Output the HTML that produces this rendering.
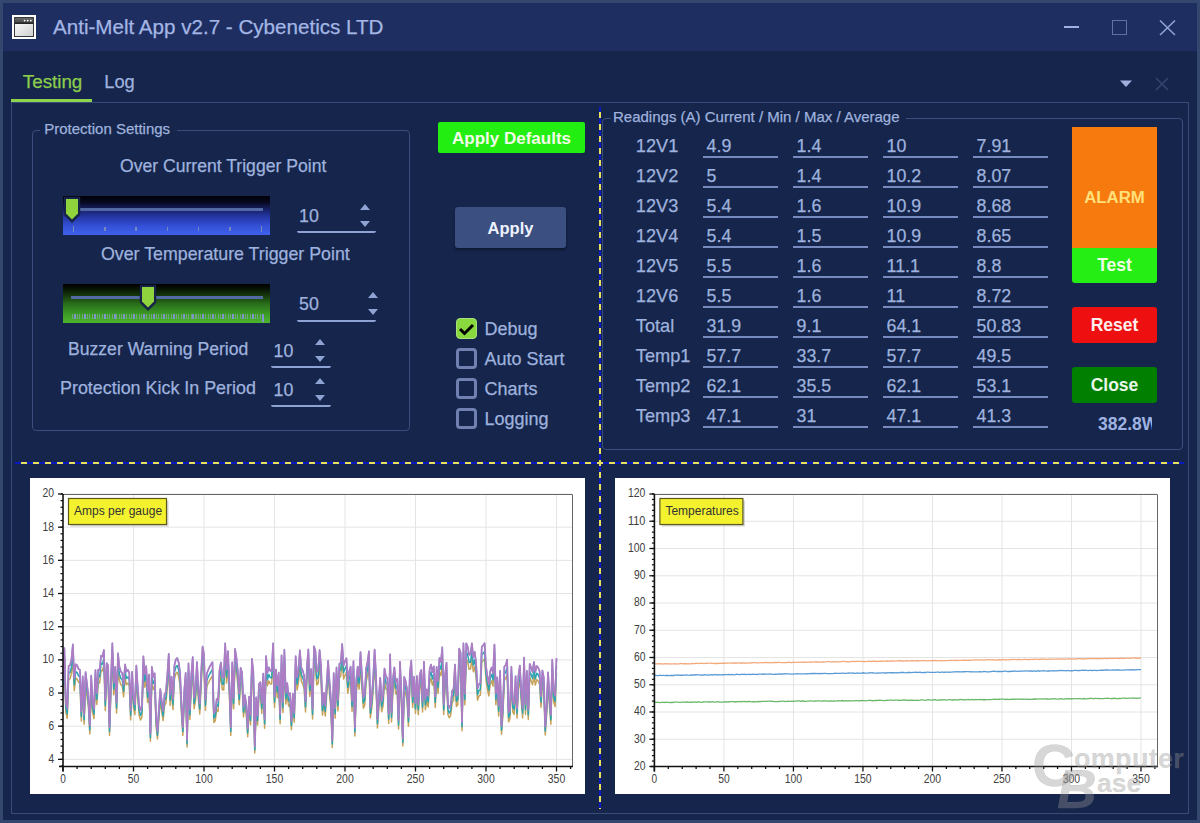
<!DOCTYPE html>
<html><head><meta charset="utf-8"><style>
html,body{margin:0;padding:0;}
body{width:1200px;height:823px;position:relative;overflow:hidden;background:#34476f;font-family:"Liberation Sans", sans-serif;}
.t{position:absolute;line-height:1;white-space:nowrap;font-family:"Liberation Sans", sans-serif;-webkit-text-stroke:0.25px currentColor;}
</style></head><body>
<div style="position:absolute;left:3px;top:3px;width:1194px;height:48px;background:#1e2e61"></div><div style="position:absolute;left:3px;top:51px;width:1194px;height:769px;background:#15254b"></div><svg style="position:absolute;left:12px;top:15px" width="24" height="24" viewBox="0 0 24 24">
<defs><linearGradient id="ib" x1="0" y1="0" x2="1" y2="1"><stop offset="0" stop-color="#fafafa"/><stop offset="1" stop-color="#cfcfcf"/></linearGradient>
<linearGradient id="it" x1="0" y1="0" x2="0" y2="1"><stop offset="0" stop-color="#6a6a6a"/><stop offset="1" stop-color="#4a4a4a"/></linearGradient></defs>
<rect x="0" y="0" width="24" height="24" fill="#ffffff"/>
<rect x="2" y="2" width="20" height="20" fill="#3a3a3a"/>
<rect x="3" y="3" width="18" height="4.5" fill="url(#it)"/>
<rect x="3" y="7.5" width="18" height="1.5" fill="#262626"/>
<rect x="3" y="9" width="18" height="12" fill="url(#ib)"/>
<circle cx="12.6" cy="5.6" r="0.9" fill="#fff"/><circle cx="15.7" cy="5.6" r="0.9" fill="#fff"/><circle cx="18.8" cy="5.6" r="0.9" fill="#fff"/>
</svg><div class="t" style="left:53.00px;top:17.00px;font-size:20.6px;color:#a3b6e4;font-weight:400;">Anti-Melt App v2.7 - Cybenetics LTD</div><div style="position:absolute;left:1064px;top:26px;width:15px;height:2px;background:#9fb1e0"></div><div style="position:absolute;left:1112px;top:20px;width:15px;height:15px;border:1.5px solid #5f72a8;box-sizing:border-box"></div><svg style="position:absolute;left:1158px;top:18px" width="19" height="19" viewBox="0 0 19 19"><path d="M2 2.5 L17 17 M17 2.5 L2 17" stroke="#93a6d8" stroke-width="1.5"/></svg><div class="t" style="left:22.80px;top:73.00px;font-size:18.8px;color:#8dce4c;font-weight:400;">Testing</div><div class="t" style="left:104.30px;top:73.00px;font-size:18.2px;color:#9fb2de;font-weight:400;">Log</div><div style="position:absolute;left:11px;top:102px;width:1178px;height:712px;border:1px solid #394b78;box-sizing:border-box"></div><div style="position:absolute;left:11px;top:99px;width:81px;height:3px;background:#8ed34c"></div><svg style="position:absolute;left:1118px;top:79px" width="16" height="10" viewBox="0 0 16 10"><path d="M2 1.5 L14 1.5 L8 8 Z" fill="#9fb0df"/></svg><svg style="position:absolute;left:1154px;top:76px" width="16" height="16" viewBox="0 0 16 16"><path d="M2 2 L14 14 M14 2 L2 14" stroke="#34466f" stroke-width="1.6"/></svg><div style="position:absolute;left:32px;top:130px;width:378px;height:301px;border:1px solid #3a4c7c;border-radius:4px;box-sizing:border-box"></div><div style="position:absolute;left:40px;top:129px;width:137px;height:3px;background:#15254b"></div><div class="t" style="left:44.20px;top:121.00px;font-size:15px;color:#9fb2de;font-weight:400;">Protection Settings</div><div class="t" style="left:120.00px;top:158.00px;font-size:17.6px;color:#9fb2de;font-weight:400;">Over Current Trigger Point</div><div class="t" style="left:101.00px;top:246.00px;font-size:17.8px;color:#9fb2de;font-weight:400;">Over Temperature Trigger Point</div><div style="position:absolute;left:63px;top:196px;width:207px;height:39px;background:linear-gradient(to bottom,#000006 0px,#06081c 6px,#141c58 12px,#2434a0 20px,#3450d6 30px,#3f62ee 39px)"></div><div style="position:absolute;left:79px;top:208px;width:184px;height:3px;background:#5369a4"></div><div style="position:absolute;left:72.5px;top:226px;width:1.6px;height:6px;background:#7389c0"></div><div style="position:absolute;left:104.0px;top:227px;width:1.6px;height:4px;background:#7389c0"></div><div style="position:absolute;left:135.0px;top:227px;width:1.6px;height:4px;background:#7389c0"></div><div style="position:absolute;left:166.5px;top:227px;width:1.6px;height:4px;background:#7389c0"></div><div style="position:absolute;left:197.5px;top:227px;width:1.6px;height:4px;background:#7389c0"></div><div style="position:absolute;left:229.0px;top:227px;width:1.6px;height:4px;background:#7389c0"></div><div style="position:absolute;left:260.5px;top:226px;width:1.6px;height:6px;background:#7389c0"></div><svg style="position:absolute;left:63px;top:196px" width="20" height="28" viewBox="0 0 20 28"><path d="M1.5 1.5 H16.5 V18.5 L9 26 L1.5 18.5 Z" fill="#172349" stroke="#172349" stroke-width="1.5" stroke-linejoin="round"/><path d="M3 3 H15 V17.5 L9 23.5 L3 17.5 Z" fill="#8fd43c"/></svg><div style="position:absolute;left:63px;top:284px;width:207px;height:39px;background:linear-gradient(to bottom,#000000 0px,#081404 5px,#153a0c 12px,#2a6e1a 20px,#3b9a24 30px,#4db52e 39px)"></div><div style="position:absolute;left:71px;top:296px;width:192px;height:3px;background:#5369a4"></div><div style="position:absolute;left:72px;top:314px;width:190px;height:5px;background:repeating-linear-gradient(to right,rgba(150,170,200,0.55) 0px,rgba(150,170,200,0.55) 1px,transparent 1px,transparent 2.47px)"></div><div style="position:absolute;left:74.0px;top:314px;width:2px;height:5px;background:#7f95cf"></div><div style="position:absolute;left:83.5px;top:314px;width:2px;height:5px;background:#7f95cf"></div><div style="position:absolute;left:93.5px;top:314px;width:2px;height:5px;background:#7f95cf"></div><div style="position:absolute;left:103.5px;top:314px;width:2px;height:5px;background:#7f95cf"></div><div style="position:absolute;left:113.5px;top:314px;width:2px;height:5px;background:#7f95cf"></div><div style="position:absolute;left:123.0px;top:314px;width:2px;height:5px;background:#7f95cf"></div><div style="position:absolute;left:133.0px;top:314px;width:2px;height:5px;background:#7f95cf"></div><div style="position:absolute;left:143.0px;top:314px;width:2px;height:5px;background:#7f95cf"></div><div style="position:absolute;left:153.0px;top:314px;width:2px;height:5px;background:#7f95cf"></div><div style="position:absolute;left:162.5px;top:314px;width:2px;height:5px;background:#7f95cf"></div><div style="position:absolute;left:172.5px;top:314px;width:2px;height:5px;background:#7f95cf"></div><div style="position:absolute;left:182.5px;top:314px;width:2px;height:5px;background:#7f95cf"></div><div style="position:absolute;left:192.0px;top:314px;width:2px;height:5px;background:#7f95cf"></div><div style="position:absolute;left:202.0px;top:314px;width:2px;height:5px;background:#7f95cf"></div><div style="position:absolute;left:212.0px;top:314px;width:2px;height:5px;background:#7f95cf"></div><div style="position:absolute;left:222.0px;top:314px;width:2px;height:5px;background:#7f95cf"></div><div style="position:absolute;left:231.5px;top:314px;width:2px;height:5px;background:#7f95cf"></div><div style="position:absolute;left:241.5px;top:314px;width:2px;height:5px;background:#7f95cf"></div><div style="position:absolute;left:251.5px;top:314px;width:2px;height:5px;background:#7f95cf"></div><div style="position:absolute;left:261.5px;top:314px;width:2px;height:8px;background:#7f95cf"></div><svg style="position:absolute;left:139px;top:284px" width="20" height="28" viewBox="0 0 20 28"><path d="M1.5 1.5 H16.5 V18.5 L9 26 L1.5 18.5 Z" fill="#172349" stroke="#172349" stroke-width="1.5" stroke-linejoin="round"/><path d="M3 3 H15 V17.5 L9 23.5 L3 17.5 Z" fill="#8fd43c"/></svg><div class="t" style="left:299.00px;top:208.00px;font-size:17.8px;color:#9fb2de;font-weight:400;">10</div><div style="position:absolute;left:297px;top:228px;width:79px;height:5px;border-bottom:2px solid #8ea2d4;border-radius:0 0 2px 2px;box-sizing:border-box"></div><svg style="position:absolute;left:360px;top:204.3px" width="10" height="24" viewBox="0 0 10 24"><path d="M0 6 L5 0 L10 6 Z M0 17 L10 17 L5 23 Z" fill="#8ea2d4"/></svg><div class="t" style="left:299.00px;top:296.00px;font-size:17.8px;color:#9fb2de;font-weight:400;">50</div><div style="position:absolute;left:297px;top:317px;width:79px;height:5px;border-bottom:2px solid #8ea2d4;border-radius:0 0 2px 2px;box-sizing:border-box"></div><svg style="position:absolute;left:368px;top:292.3px" width="10" height="24" viewBox="0 0 10 24"><path d="M0 6 L5 0 L10 6 Z M0 17 L10 17 L5 23 Z" fill="#8ea2d4"/></svg><div class="t" style="left:68.00px;top:341.00px;font-size:17.6px;color:#9fb2de;font-weight:400;">Buzzer Warning Period</div><div class="t" style="left:273.50px;top:343.00px;font-size:17.8px;color:#9fb2de;font-weight:400;">10</div><div style="position:absolute;left:271px;top:363px;width:60px;height:5px;border-bottom:2px solid #8ea2d4;border-radius:0 0 2px 2px;box-sizing:border-box"></div><svg style="position:absolute;left:315px;top:339px" width="10" height="24" viewBox="0 0 10 24"><path d="M0 6 L5 0 L10 6 Z M0 17 L10 17 L5 23 Z" fill="#8ea2d4"/></svg><div class="t" style="left:60.00px;top:380.00px;font-size:17.9px;color:#9fb2de;font-weight:400;">Protection Kick In Period</div><div class="t" style="left:273.50px;top:382.00px;font-size:17.8px;color:#9fb2de;font-weight:400;">10</div><div style="position:absolute;left:271px;top:402px;width:60px;height:5px;border-bottom:2px solid #8ea2d4;border-radius:0 0 2px 2px;box-sizing:border-box"></div><svg style="position:absolute;left:315px;top:378.3px" width="10" height="24" viewBox="0 0 10 24"><path d="M0 6 L5 0 L10 6 Z M0 17 L10 17 L5 23 Z" fill="#8ea2d4"/></svg><div style="position:absolute;left:438px;top:122px;width:147px;height:31px;background:#22ee11;border-radius:2px"></div><div class="t" style="left:438px;top:123px;width:147px;height:31px;line-height:31px;text-align:center;font-size:17px;font-weight:700;color:#f2fbe8;-webkit-text-stroke:0">Apply Defaults</div><div style="position:absolute;left:455px;top:207px;width:111px;height:41px;background:#3b4f80;border-radius:3px;box-shadow:0 2px 3px rgba(0,0,0,0.35)"></div><div class="t" style="left:455px;top:208px;width:111px;height:41px;line-height:41px;text-align:center;font-size:16.5px;font-weight:700;color:#eef2fb;-webkit-text-stroke:0">Apply</div><div style="position:absolute;left:456px;top:318px;width:21px;height:21px;background:#88d83e;border-radius:4px;border:1.2px solid #a6e27c;box-sizing:border-box"></div><svg style="position:absolute;left:456px;top:318px" width="21" height="21" viewBox="0 0 21 21"><path d="M4 11 L8.5 15.5 L17 7" fill="none" stroke="#000" stroke-width="3"/></svg><div class="t" style="left:484.50px;top:320.00px;font-size:18px;color:#9fb2de;font-weight:400;">Debug</div><div style="position:absolute;left:456px;top:348px;width:21px;height:21px;border:3px solid #6f80b1;border-radius:4px;box-sizing:border-box"></div><div class="t" style="left:484.50px;top:350.00px;font-size:18px;color:#9fb2de;font-weight:400;">Auto Start</div><div style="position:absolute;left:456px;top:378px;width:21px;height:21px;border:3px solid #6f80b1;border-radius:4px;box-sizing:border-box"></div><div class="t" style="left:484.50px;top:380.00px;font-size:18px;color:#9fb2de;font-weight:400;">Charts</div><div style="position:absolute;left:456px;top:408px;width:21px;height:21px;border:3px solid #6f80b1;border-radius:4px;box-sizing:border-box"></div><div class="t" style="left:484.50px;top:410.00px;font-size:18px;color:#9fb2de;font-weight:400;">Logging</div><div style="position:absolute;left:599px;top:107px;width:2px;height:702px;background:repeating-linear-gradient(to bottom,#0b1bc4 0px,#0b1bc4 5px,#e8e060 5px,#e8e060 11px,#0b1bc4 11px,#0b1bc4 12px)"></div><div style="position:absolute;left:15px;top:462px;width:1169px;height:2px;background:repeating-linear-gradient(to right,#0b1bc4 0px,#0b1bc4 6px,#e8e060 6px,#e8e060 12px)"></div><div style="position:absolute;left:602px;top:118px;width:581px;height:332px;border:1px solid #3a4c7c;border-radius:4px;box-sizing:border-box"></div><div style="position:absolute;left:611px;top:117px;width:295px;height:3px;background:#15254b"></div><div class="t" style="left:613.00px;top:109.00px;font-size:15px;color:#9fb2de;font-weight:400;">Readings (A) Current / Min / Max / Average</div><div class="t" style="left:635.80px;top:137.00px;font-size:18.2px;color:#9fb2de;font-weight:400;">12V1</div><div class="t" style="left:706.60px;top:138.00px;font-size:17.8px;color:#9fb2de;font-weight:400;">4.9</div><div style="position:absolute;left:703px;top:156px;width:75px;height:2px;background:#788bc0"></div><div class="t" style="left:796.60px;top:138.00px;font-size:17.8px;color:#9fb2de;font-weight:400;">1.4</div><div style="position:absolute;left:793px;top:156px;width:75px;height:2px;background:#788bc0"></div><div class="t" style="left:886.60px;top:138.00px;font-size:17.8px;color:#9fb2de;font-weight:400;">10</div><div style="position:absolute;left:883px;top:156px;width:75px;height:2px;background:#788bc0"></div><div class="t" style="left:976.60px;top:138.00px;font-size:17.8px;color:#9fb2de;font-weight:400;">7.91</div><div style="position:absolute;left:973px;top:156px;width:75px;height:2px;background:#788bc0"></div><div class="t" style="left:635.80px;top:167.00px;font-size:18.2px;color:#9fb2de;font-weight:400;">12V2</div><div class="t" style="left:706.60px;top:168.00px;font-size:17.8px;color:#9fb2de;font-weight:400;">5</div><div style="position:absolute;left:703px;top:186px;width:75px;height:2px;background:#788bc0"></div><div class="t" style="left:796.60px;top:168.00px;font-size:17.8px;color:#9fb2de;font-weight:400;">1.4</div><div style="position:absolute;left:793px;top:186px;width:75px;height:2px;background:#788bc0"></div><div class="t" style="left:886.60px;top:168.00px;font-size:17.8px;color:#9fb2de;font-weight:400;">10.2</div><div style="position:absolute;left:883px;top:186px;width:75px;height:2px;background:#788bc0"></div><div class="t" style="left:976.60px;top:168.00px;font-size:17.8px;color:#9fb2de;font-weight:400;">8.07</div><div style="position:absolute;left:973px;top:186px;width:75px;height:2px;background:#788bc0"></div><div class="t" style="left:635.80px;top:197.00px;font-size:18.2px;color:#9fb2de;font-weight:400;">12V3</div><div class="t" style="left:706.60px;top:198.00px;font-size:17.8px;color:#9fb2de;font-weight:400;">5.4</div><div style="position:absolute;left:703px;top:216px;width:75px;height:2px;background:#788bc0"></div><div class="t" style="left:796.60px;top:198.00px;font-size:17.8px;color:#9fb2de;font-weight:400;">1.6</div><div style="position:absolute;left:793px;top:216px;width:75px;height:2px;background:#788bc0"></div><div class="t" style="left:886.60px;top:198.00px;font-size:17.8px;color:#9fb2de;font-weight:400;">10.9</div><div style="position:absolute;left:883px;top:216px;width:75px;height:2px;background:#788bc0"></div><div class="t" style="left:976.60px;top:198.00px;font-size:17.8px;color:#9fb2de;font-weight:400;">8.68</div><div style="position:absolute;left:973px;top:216px;width:75px;height:2px;background:#788bc0"></div><div class="t" style="left:635.80px;top:227.00px;font-size:18.2px;color:#9fb2de;font-weight:400;">12V4</div><div class="t" style="left:706.60px;top:228.00px;font-size:17.8px;color:#9fb2de;font-weight:400;">5.4</div><div style="position:absolute;left:703px;top:246px;width:75px;height:2px;background:#788bc0"></div><div class="t" style="left:796.60px;top:228.00px;font-size:17.8px;color:#9fb2de;font-weight:400;">1.5</div><div style="position:absolute;left:793px;top:246px;width:75px;height:2px;background:#788bc0"></div><div class="t" style="left:886.60px;top:228.00px;font-size:17.8px;color:#9fb2de;font-weight:400;">10.9</div><div style="position:absolute;left:883px;top:246px;width:75px;height:2px;background:#788bc0"></div><div class="t" style="left:976.60px;top:228.00px;font-size:17.8px;color:#9fb2de;font-weight:400;">8.65</div><div style="position:absolute;left:973px;top:246px;width:75px;height:2px;background:#788bc0"></div><div class="t" style="left:635.80px;top:257.00px;font-size:18.2px;color:#9fb2de;font-weight:400;">12V5</div><div class="t" style="left:706.60px;top:258.00px;font-size:17.8px;color:#9fb2de;font-weight:400;">5.5</div><div style="position:absolute;left:703px;top:276px;width:75px;height:2px;background:#788bc0"></div><div class="t" style="left:796.60px;top:258.00px;font-size:17.8px;color:#9fb2de;font-weight:400;">1.6</div><div style="position:absolute;left:793px;top:276px;width:75px;height:2px;background:#788bc0"></div><div class="t" style="left:886.60px;top:258.00px;font-size:17.8px;color:#9fb2de;font-weight:400;">11.1</div><div style="position:absolute;left:883px;top:276px;width:75px;height:2px;background:#788bc0"></div><div class="t" style="left:976.60px;top:258.00px;font-size:17.8px;color:#9fb2de;font-weight:400;">8.8</div><div style="position:absolute;left:973px;top:276px;width:75px;height:2px;background:#788bc0"></div><div class="t" style="left:635.80px;top:287.00px;font-size:18.2px;color:#9fb2de;font-weight:400;">12V6</div><div class="t" style="left:706.60px;top:288.00px;font-size:17.8px;color:#9fb2de;font-weight:400;">5.5</div><div style="position:absolute;left:703px;top:306px;width:75px;height:2px;background:#788bc0"></div><div class="t" style="left:796.60px;top:288.00px;font-size:17.8px;color:#9fb2de;font-weight:400;">1.6</div><div style="position:absolute;left:793px;top:306px;width:75px;height:2px;background:#788bc0"></div><div class="t" style="left:886.60px;top:288.00px;font-size:17.8px;color:#9fb2de;font-weight:400;">11</div><div style="position:absolute;left:883px;top:306px;width:75px;height:2px;background:#788bc0"></div><div class="t" style="left:976.60px;top:288.00px;font-size:17.8px;color:#9fb2de;font-weight:400;">8.72</div><div style="position:absolute;left:973px;top:306px;width:75px;height:2px;background:#788bc0"></div><div class="t" style="left:635.80px;top:317.00px;font-size:18.2px;color:#9fb2de;font-weight:400;">Total</div><div class="t" style="left:706.60px;top:318.00px;font-size:17.8px;color:#9fb2de;font-weight:400;">31.9</div><div style="position:absolute;left:703px;top:336px;width:75px;height:2px;background:#788bc0"></div><div class="t" style="left:796.60px;top:318.00px;font-size:17.8px;color:#9fb2de;font-weight:400;">9.1</div><div style="position:absolute;left:793px;top:336px;width:75px;height:2px;background:#788bc0"></div><div class="t" style="left:886.60px;top:318.00px;font-size:17.8px;color:#9fb2de;font-weight:400;">64.1</div><div style="position:absolute;left:883px;top:336px;width:75px;height:2px;background:#788bc0"></div><div class="t" style="left:976.60px;top:318.00px;font-size:17.8px;color:#9fb2de;font-weight:400;">50.83</div><div style="position:absolute;left:973px;top:336px;width:75px;height:2px;background:#788bc0"></div><div class="t" style="left:635.80px;top:347.00px;font-size:18.2px;color:#9fb2de;font-weight:400;">Temp1</div><div class="t" style="left:706.60px;top:348.00px;font-size:17.8px;color:#9fb2de;font-weight:400;">57.7</div><div style="position:absolute;left:703px;top:366px;width:75px;height:2px;background:#788bc0"></div><div class="t" style="left:796.60px;top:348.00px;font-size:17.8px;color:#9fb2de;font-weight:400;">33.7</div><div style="position:absolute;left:793px;top:366px;width:75px;height:2px;background:#788bc0"></div><div class="t" style="left:886.60px;top:348.00px;font-size:17.8px;color:#9fb2de;font-weight:400;">57.7</div><div style="position:absolute;left:883px;top:366px;width:75px;height:2px;background:#788bc0"></div><div class="t" style="left:976.60px;top:348.00px;font-size:17.8px;color:#9fb2de;font-weight:400;">49.5</div><div style="position:absolute;left:973px;top:366px;width:75px;height:2px;background:#788bc0"></div><div class="t" style="left:635.80px;top:377.00px;font-size:18.2px;color:#9fb2de;font-weight:400;">Temp2</div><div class="t" style="left:706.60px;top:378.00px;font-size:17.8px;color:#9fb2de;font-weight:400;">62.1</div><div style="position:absolute;left:703px;top:396px;width:75px;height:2px;background:#788bc0"></div><div class="t" style="left:796.60px;top:378.00px;font-size:17.8px;color:#9fb2de;font-weight:400;">35.5</div><div style="position:absolute;left:793px;top:396px;width:75px;height:2px;background:#788bc0"></div><div class="t" style="left:886.60px;top:378.00px;font-size:17.8px;color:#9fb2de;font-weight:400;">62.1</div><div style="position:absolute;left:883px;top:396px;width:75px;height:2px;background:#788bc0"></div><div class="t" style="left:976.60px;top:378.00px;font-size:17.8px;color:#9fb2de;font-weight:400;">53.1</div><div style="position:absolute;left:973px;top:396px;width:75px;height:2px;background:#788bc0"></div><div class="t" style="left:635.80px;top:407.00px;font-size:18.2px;color:#9fb2de;font-weight:400;">Temp3</div><div class="t" style="left:706.60px;top:408.00px;font-size:17.8px;color:#9fb2de;font-weight:400;">47.1</div><div style="position:absolute;left:703px;top:426px;width:75px;height:2px;background:#788bc0"></div><div class="t" style="left:796.60px;top:408.00px;font-size:17.8px;color:#9fb2de;font-weight:400;">31</div><div style="position:absolute;left:793px;top:426px;width:75px;height:2px;background:#788bc0"></div><div class="t" style="left:886.60px;top:408.00px;font-size:17.8px;color:#9fb2de;font-weight:400;">47.1</div><div style="position:absolute;left:883px;top:426px;width:75px;height:2px;background:#788bc0"></div><div class="t" style="left:976.60px;top:408.00px;font-size:17.8px;color:#9fb2de;font-weight:400;">41.3</div><div style="position:absolute;left:973px;top:426px;width:75px;height:2px;background:#788bc0"></div><div style="position:absolute;left:1072px;top:127px;width:85px;height:121px;background:#f67a0d"></div><div class="t" style="left:1072px;top:189.5px;width:85px;text-align:center;font-size:16.8px;font-weight:700;color:#ffe07a;-webkit-text-stroke:0">ALARM</div><div style="position:absolute;left:1072px;top:248px;width:85px;height:35px;background:#25ee14;border-radius:0 0 3px 3px"></div><div class="t" style="left:1072px;top:248px;width:85px;height:35px;line-height:35px;text-align:center;font-size:17.5px;font-weight:700;color:#f0fbe6;-webkit-text-stroke:0">Test</div><div style="position:absolute;left:1072px;top:307px;width:85px;height:36px;background:#ee1010;border-radius:3px"></div><div class="t" style="left:1072px;top:307px;width:85px;height:36px;line-height:36px;text-align:center;font-size:17.5px;font-weight:700;color:#fdeeee;-webkit-text-stroke:0">Reset</div><div style="position:absolute;left:1072px;top:367px;width:85px;height:36px;background:#017f01;border-radius:3px"></div><div class="t" style="left:1072px;top:367px;width:85px;height:36px;line-height:36px;text-align:center;font-size:17.5px;font-weight:700;color:#eaf6ea;-webkit-text-stroke:0">Close</div><div style="position:absolute;left:1090px;top:410px;width:62px;height:26px;overflow:hidden"><div class="t" style="left:8px;top:6.3px;font-size:17.5px;font-weight:700;color:#9fb3e2;-webkit-text-stroke:0">382.8W</div></div><svg style="position:absolute;left:30px;top:478px" width="555" height="316" viewBox="0 0 555 316"><rect width="555" height="316" fill="#fff"/><line x1="33" y1="16.00" x2="542" y2="16.00" stroke="#e4e4e4" stroke-width="1"/><line x1="33" y1="49.17" x2="542" y2="49.17" stroke="#e4e4e4" stroke-width="1"/><line x1="33" y1="82.34" x2="542" y2="82.34" stroke="#e4e4e4" stroke-width="1"/><line x1="33" y1="115.51" x2="542" y2="115.51" stroke="#e4e4e4" stroke-width="1"/><line x1="33" y1="148.68" x2="542" y2="148.68" stroke="#e4e4e4" stroke-width="1"/><line x1="33" y1="181.86" x2="542" y2="181.86" stroke="#e4e4e4" stroke-width="1"/><line x1="33" y1="215.03" x2="542" y2="215.03" stroke="#e4e4e4" stroke-width="1"/><line x1="33" y1="248.20" x2="542" y2="248.20" stroke="#e4e4e4" stroke-width="1"/><line x1="33" y1="281.37" x2="542" y2="281.37" stroke="#e4e4e4" stroke-width="1"/><line x1="103.50" y1="16" x2="103.50" y2="288.5" stroke="#e4e4e4" stroke-width="1"/><line x1="174.00" y1="16" x2="174.00" y2="288.5" stroke="#e4e4e4" stroke-width="1"/><line x1="244.50" y1="16" x2="244.50" y2="288.5" stroke="#e4e4e4" stroke-width="1"/><line x1="315.00" y1="16" x2="315.00" y2="288.5" stroke="#e4e4e4" stroke-width="1"/><line x1="385.50" y1="16" x2="385.50" y2="288.5" stroke="#e4e4e4" stroke-width="1"/><line x1="456.00" y1="16" x2="456.00" y2="288.5" stroke="#e4e4e4" stroke-width="1"/><line x1="526.50" y1="16" x2="526.50" y2="288.5" stroke="#e4e4e4" stroke-width="1"/><polyline points="33.00,214.27 34.41,185.09 35.82,234.37 37.23,240.35 38.64,201.56 40.05,200.90 41.46,195.54 42.87,181.80 44.28,212.68 45.69,200.07 47.10,200.80 48.51,204.27 49.92,205.07 51.33,243.07 52.74,210.94 54.15,246.13 55.56,207.16 56.97,217.79 58.38,229.02 59.79,256.00 61.20,210.38 62.61,233.85 64.02,240.58 65.43,205.27 66.84,226.45 68.25,204.84 69.66,205.05 71.07,192.14 72.48,192.90 73.89,186.98 75.30,232.60 76.71,199.02 78.12,201.09 79.53,257.35 80.94,213.41 82.35,180.78 83.76,216.85 85.17,202.27 86.58,234.95 87.99,190.00 89.40,202.32 90.81,206.63 92.22,207.94 93.63,218.78 95.04,200.17 96.45,206.74 97.86,205.17 99.27,207.67 100.68,241.92 102.09,206.95 103.50,229.92 104.91,236.71 106.32,201.17 107.73,220.57 109.14,237.25 110.55,241.96 111.96,238.82 113.37,192.69 114.78,209.23 116.19,201.77 117.60,224.61 119.01,209.42 120.42,263.34 121.83,202.37 123.24,211.51 124.65,208.30 126.06,247.46 127.47,260.94 128.88,241.09 130.29,222.68 131.70,233.37 133.11,242.56 134.52,227.70 135.93,225.15 137.34,209.42 138.75,190.49 140.16,227.53 141.57,211.31 142.98,231.60 144.39,201.38 145.80,195.67 147.21,194.28 148.62,198.27 150.03,207.14 151.44,235.34 152.85,257.41 154.26,223.84 155.67,207.93 157.08,269.08 158.49,199.18 159.90,241.37 161.31,209.58 162.72,193.44 164.13,230.70 165.54,222.23 166.95,198.00 168.36,221.43 169.77,235.93 171.18,206.98 172.59,183.83 174.00,191.03 175.41,232.36 176.82,208.43 178.23,205.26 179.64,202.35 181.05,200.02 182.46,198.03 183.87,244.60 185.28,242.77 186.69,231.76 188.10,233.37 189.51,205.32 190.92,198.36 192.33,211.85 193.74,212.08 195.15,180.78 196.56,205.11 197.97,188.05 199.38,217.71 200.79,257.50 202.20,198.17 203.61,230.72 205.02,185.94 206.43,193.97 207.84,206.60 209.25,226.78 210.66,203.31 212.07,207.77 213.48,239.00 214.89,228.25 216.30,236.73 217.71,258.73 219.12,229.50 220.53,246.79 221.94,194.97 223.35,206.72 224.76,275.04 226.17,230.22 227.58,246.97 228.99,218.09 230.40,216.35 231.81,235.43 233.22,208.44 234.63,250.13 236.04,192.41 237.45,207.79 238.86,202.89 240.27,205.98 241.68,206.01 243.09,180.78 244.50,229.38 245.91,204.79 247.32,219.63 248.73,207.55 250.14,245.73 251.55,191.72 252.96,234.47 254.37,186.68 255.78,226.10 257.19,217.20 258.60,228.13 260.01,226.51 261.42,251.79 262.83,227.04 264.24,244.30 265.65,192.57 267.06,212.03 268.47,204.70 269.88,187.25 271.29,202.89 272.70,205.80 274.11,210.51 275.52,233.93 276.93,202.15 278.34,186.37 279.75,218.45 281.16,204.43 282.57,241.06 283.98,183.56 285.39,187.64 286.80,206.90 288.21,205.36 289.62,187.02 291.03,201.45 292.44,237.26 293.85,226.21 295.26,237.95 296.67,217.70 298.08,196.78 299.49,215.35 300.90,231.75 302.31,269.43 303.72,207.98 305.13,240.16 306.54,202.91 307.95,232.84 309.36,199.72 310.77,198.26 312.18,181.40 313.59,201.00 315.00,197.22 316.41,194.43 317.82,215.13 319.23,206.43 320.64,202.16 322.05,233.44 323.46,197.20 324.87,257.99 326.28,214.86 327.69,202.20 329.10,211.23 330.51,188.86 331.92,209.25 333.33,230.13 334.74,227.11 336.15,203.86 337.56,197.57 338.97,188.19 340.38,239.93 341.79,229.82 343.20,212.36 344.61,186.49 346.02,208.67 347.43,249.95 348.84,230.07 350.25,212.33 351.66,233.72 353.07,227.91 354.48,203.86 355.89,210.97 357.30,212.51 358.71,245.57 360.12,190.80 361.53,244.00 362.94,213.27 364.35,202.88 365.76,215.92 367.17,213.49 368.58,251.10 369.99,197.74 371.40,225.69 372.81,267.92 374.22,211.54 375.63,215.54 377.04,222.72 378.45,248.15 379.86,208.10 381.27,196.54 382.68,229.52 384.09,211.50 385.50,235.54 386.91,210.80 388.32,236.67 389.73,209.63 391.14,205.35 392.55,233.99 393.96,197.75 395.37,231.70 396.78,222.98 398.19,228.90 399.60,205.06 401.01,200.24 402.42,207.20 403.83,201.83 405.24,229.41 406.65,202.28 408.06,215.36 409.47,194.36 410.88,197.79 412.29,184.48 413.70,236.54 415.11,209.04 416.52,198.51 417.93,236.41 419.34,239.84 420.75,237.07 422.16,224.21 423.57,222.63 424.98,200.28 426.39,228.53 427.80,226.70 429.21,185.60 430.62,189.38 432.03,252.79 433.44,180.78 434.85,226.86 436.26,180.78 437.67,183.98 439.08,191.29 440.49,191.03 441.90,180.78 443.31,193.67 444.72,188.67 446.13,199.33 447.54,222.14 448.95,217.99 450.36,217.29 451.77,183.98 453.18,182.70 454.59,180.78 456.00,201.83 457.41,211.08 458.82,217.89 460.23,206.25 461.64,202.89 463.05,208.18 464.46,181.88 465.87,226.83 467.28,211.90 468.69,238.02 470.10,206.03 471.51,256.23 472.92,236.94 474.33,202.29 475.74,200.60 477.15,195.80 478.56,244.05 479.97,240.63 481.38,202.20 482.79,234.07 484.20,236.30 485.61,210.86 487.02,240.09 488.43,210.67 489.84,201.17 491.25,223.60 492.66,239.91 494.07,193.82 495.48,236.50 496.89,206.02 498.30,241.57 499.71,199.64 501.12,202.86 502.53,206.79 503.94,197.91 505.35,207.08 506.76,201.60 508.17,202.94 509.58,206.31 510.99,229.15 512.40,205.60 513.81,212.47 515.22,257.00 516.63,237.19 518.04,207.44 519.45,227.87 520.86,246.20 522.27,195.82 523.68,223.83 525.09,228.52 526.50,194.50" fill="none" stroke="#c6a25a" stroke-width="1.5" stroke-linejoin="round"/><polyline points="33.00,208.43 34.41,177.98 35.82,229.42 37.23,235.66 38.64,195.17 40.05,194.48 41.46,188.88 42.87,174.55 44.28,206.78 45.69,193.62 47.10,194.38 48.51,198.00 49.92,198.83 51.33,238.49 52.74,204.96 54.15,241.69 55.56,201.01 56.97,212.11 58.38,223.83 59.79,251.99 61.20,204.38 62.61,228.87 64.02,235.90 65.43,199.04 66.84,221.15 68.25,198.59 69.66,198.82 71.07,185.34 72.48,186.13 73.89,179.95 75.30,227.57 76.71,192.52 78.12,194.68 79.53,253.40 80.94,207.54 82.35,173.48 83.76,211.12 85.17,195.91 86.58,230.02 87.99,183.11 89.40,195.96 90.81,200.46 92.22,201.83 93.63,213.15 95.04,193.72 96.45,200.58 97.86,198.94 99.27,201.55 100.68,237.30 102.09,200.79 103.50,224.78 104.91,231.86 106.32,194.76 107.73,215.01 109.14,232.42 110.55,237.34 111.96,234.06 113.37,185.91 114.78,203.18 116.19,195.39 117.60,219.23 119.01,203.37 120.42,259.65 121.83,196.02 123.24,205.55 124.65,202.20 126.06,243.08 127.47,257.14 128.88,236.43 130.29,217.21 131.70,228.37 133.11,237.97 134.52,222.46 135.93,219.79 137.34,203.38 138.75,183.62 140.16,222.27 141.57,205.35 142.98,226.52 144.39,194.98 145.80,189.02 147.21,187.58 148.62,191.74 150.03,201.00 151.44,230.42 152.85,253.46 154.26,218.42 155.67,201.82 157.08,265.64 158.49,192.69 159.90,236.72 161.31,203.54 162.72,186.70 164.13,225.59 165.54,216.75 166.95,191.46 168.36,215.91 169.77,231.04 171.18,200.83 172.59,176.66 174.00,184.19 175.41,227.31 176.82,202.34 178.23,199.03 179.64,196.00 181.05,193.56 182.46,191.49 183.87,240.09 185.28,238.18 186.69,226.69 188.10,228.38 189.51,199.09 190.92,191.83 192.33,205.91 193.74,206.15 195.15,173.48 196.56,198.88 197.97,181.07 199.38,212.03 200.79,253.56 202.20,191.64 203.61,225.61 205.02,178.87 206.43,187.25 207.84,200.43 209.25,221.49 210.66,197.00 212.07,201.65 213.48,234.25 214.89,223.03 216.30,231.88 217.71,254.84 219.12,224.34 220.53,242.37 221.94,188.29 223.35,200.55 224.76,271.86 226.17,225.08 227.58,242.57 228.99,212.43 230.40,210.60 231.81,230.52 233.22,202.36 234.63,245.87 236.04,185.62 237.45,201.67 238.86,196.56 240.27,199.78 241.68,199.82 243.09,173.48 244.50,224.21 245.91,198.54 247.32,214.03 248.73,201.42 250.14,241.27 251.55,184.90 252.96,229.52 254.37,179.64 255.78,220.78 257.19,211.50 258.60,222.90 260.01,221.21 261.42,247.60 262.83,221.77 264.24,239.78 265.65,185.79 267.06,206.10 268.47,198.45 269.88,180.24 271.29,196.56 272.70,199.59 274.11,204.51 275.52,228.95 276.93,195.79 278.34,179.31 279.75,212.80 281.16,198.16 282.57,236.39 283.98,176.38 285.39,180.64 286.80,200.75 288.21,199.13 289.62,180.00 291.03,195.05 292.44,232.43 293.85,220.89 295.26,233.15 296.67,212.02 298.08,190.18 299.49,209.57 300.90,226.68 302.31,266.01 303.72,201.87 305.13,235.46 306.54,196.58 307.95,227.82 309.36,193.25 310.77,191.73 312.18,174.13 313.59,194.59 315.00,190.64 316.41,187.73 317.82,209.34 319.23,200.26 320.64,195.79 322.05,228.45 323.46,190.62 324.87,254.07 326.28,209.05 327.69,195.84 329.10,205.27 330.51,181.92 331.92,203.20 333.33,224.99 334.74,221.84 336.15,197.57 337.56,191.01 338.97,181.21 340.38,235.21 341.79,224.66 343.20,206.44 344.61,179.44 346.02,202.59 347.43,245.68 348.84,224.93 350.25,206.41 351.66,228.73 353.07,222.67 354.48,197.57 355.89,204.99 357.30,206.60 358.71,241.10 360.12,183.94 361.53,239.46 362.94,207.40 364.35,196.55 365.76,210.16 367.17,207.62 368.58,246.88 369.99,191.19 371.40,220.35 372.81,264.43 374.22,205.58 375.63,209.77 377.04,217.26 378.45,243.80 379.86,201.99 381.27,189.93 382.68,224.36 384.09,205.54 385.50,230.64 386.91,204.81 388.32,231.82 389.73,203.60 391.14,199.12 392.55,229.02 393.96,191.19 395.37,226.63 396.78,217.53 398.19,223.71 399.60,198.82 401.01,193.79 402.42,201.05 403.83,195.45 405.24,224.24 406.65,195.92 408.06,209.58 409.47,187.65 410.88,191.23 412.29,177.34 413.70,231.68 415.11,202.98 416.52,191.99 417.93,231.55 419.34,235.12 420.75,232.23 422.16,218.81 423.57,217.16 424.98,193.84 426.39,223.32 427.80,221.41 429.21,178.51 430.62,182.46 432.03,248.64 433.44,173.48 434.85,221.58 436.26,173.48 437.67,176.83 439.08,184.45 440.49,184.18 441.90,173.48 443.31,186.94 444.72,181.72 446.13,192.84 447.54,216.65 448.95,212.32 450.36,211.59 451.77,176.82 453.18,175.48 454.59,173.48 456.00,195.45 457.41,205.10 458.82,212.21 460.23,200.07 461.64,196.56 463.05,202.08 464.46,174.63 465.87,221.54 467.28,205.96 468.69,233.23 470.10,199.84 471.51,252.23 472.92,232.10 474.33,195.94 475.74,194.17 477.15,189.16 478.56,239.52 479.97,235.95 481.38,195.84 482.79,229.11 484.20,231.43 485.61,204.88 487.02,235.38 488.43,204.68 489.84,194.76 491.25,218.17 492.66,235.20 494.07,187.09 495.48,231.64 496.89,199.82 498.30,236.93 499.71,193.16 501.12,196.53 502.53,200.63 503.94,191.36 505.35,200.93 506.76,195.21 508.17,196.61 509.58,200.13 510.99,223.97 512.40,199.38 513.81,206.56 515.22,253.04 516.63,232.36 518.04,201.31 519.45,222.63 520.86,241.76 522.27,189.18 523.68,218.42 525.09,223.31 526.50,187.81" fill="none" stroke="#2aa3b3" stroke-width="1.5" stroke-linejoin="round"/><polyline points="33.00,201.87 34.41,169.99 35.82,223.85 37.23,230.38 38.64,187.98 40.05,187.26 41.46,181.40 42.87,166.39 44.28,200.14 45.69,186.35 47.10,187.16 48.51,190.95 49.92,191.81 51.33,233.34 52.74,198.24 54.15,236.69 55.56,194.10 56.97,205.72 58.38,217.99 59.79,247.48 61.20,197.62 62.61,223.27 64.02,230.63 65.43,192.04 66.84,215.19 68.25,191.57 69.66,191.80 71.07,177.69 72.48,178.52 73.89,172.04 75.30,221.91 76.71,185.21 78.12,187.47 79.53,248.96 80.94,200.93 82.35,165.27 83.76,204.69 85.17,188.76 86.58,224.47 87.99,175.35 89.40,188.81 90.81,193.53 92.22,194.96 93.63,206.81 95.04,186.46 96.45,193.64 97.86,191.93 99.27,194.66 100.68,232.09 102.09,193.87 103.50,218.98 104.91,226.40 106.32,187.55 107.73,208.76 109.14,226.99 110.55,232.14 111.96,228.70 113.37,178.28 114.78,196.37 116.19,188.21 117.60,213.17 119.01,196.57 120.42,255.50 121.83,188.87 123.24,198.85 124.65,195.35 126.06,238.15 127.47,252.88 128.88,231.19 130.29,211.07 131.70,222.75 133.11,232.80 134.52,216.56 135.93,213.77 137.34,196.57 138.75,175.89 140.16,216.36 141.57,198.64 142.98,220.81 144.39,187.79 145.80,181.55 147.21,180.03 148.62,184.39 150.03,194.08 151.44,224.90 152.85,249.02 154.26,212.33 155.67,194.95 157.08,261.77 158.49,185.39 159.90,231.49 161.31,196.74 162.72,179.11 164.13,219.83 165.54,210.58 166.95,184.10 168.36,209.69 169.77,225.55 171.18,193.91 172.59,168.60 174.00,176.48 175.41,221.64 176.82,195.49 178.23,192.02 179.64,188.85 181.05,186.30 182.46,184.13 183.87,235.02 185.28,233.02 186.69,220.98 188.10,222.75 189.51,192.09 190.92,184.48 192.33,199.23 193.74,199.48 195.15,165.27 196.56,191.87 197.97,173.22 199.38,205.64 200.79,249.12 202.20,184.28 203.61,219.86 205.02,170.91 206.43,179.69 207.84,193.49 209.25,215.55 210.66,189.90 212.07,194.77 213.48,228.90 214.89,217.15 216.30,226.42 217.71,250.46 219.12,218.52 220.53,237.41 221.94,180.78 223.35,193.62 224.76,268.29 226.17,219.30 227.58,237.62 228.99,206.05 230.40,204.14 231.81,225.00 233.22,195.51 234.63,241.07 236.04,177.98 237.45,194.79 238.86,189.44 240.27,192.81 241.68,192.85 243.09,165.27 244.50,218.39 245.91,191.51 247.32,207.73 248.73,194.53 250.14,236.25 251.55,177.23 252.96,223.95 254.37,171.72 255.78,214.80 257.19,205.08 258.60,217.02 260.01,215.25 261.42,242.88 262.83,215.83 264.24,234.70 265.65,178.16 267.06,199.43 268.47,191.41 269.88,172.35 271.29,189.44 272.70,192.61 274.11,197.76 275.52,223.36 276.93,188.63 278.34,171.38 279.75,206.44 281.16,191.12 282.57,231.15 283.98,168.31 285.39,172.77 286.80,193.82 288.21,192.13 289.62,172.10 291.03,187.86 292.44,227.00 293.85,214.92 295.26,227.76 296.67,205.62 298.08,182.75 299.49,203.06 300.90,220.98 302.31,262.16 303.72,195.00 305.13,230.17 306.54,189.46 307.95,222.17 309.36,185.97 310.77,184.38 312.18,165.96 313.59,187.37 315.00,183.24 316.41,180.19 317.82,202.82 319.23,193.31 320.64,188.63 322.05,222.83 323.46,183.22 324.87,249.65 326.28,202.51 327.69,188.68 329.10,198.55 330.51,174.10 331.92,196.39 333.33,219.21 334.74,215.91 336.15,190.50 337.56,183.62 338.97,173.37 340.38,229.91 341.79,218.87 343.20,199.79 344.61,171.51 346.02,195.75 347.43,240.87 348.84,219.14 350.25,199.75 351.66,223.13 353.07,216.78 354.48,190.49 355.89,198.27 357.30,199.95 358.71,236.08 360.12,176.23 361.53,234.36 362.94,200.79 364.35,189.43 365.76,203.68 367.17,201.02 368.58,242.13 369.99,183.81 371.40,214.35 372.81,260.51 374.22,198.89 375.63,203.27 377.04,211.11 378.45,238.91 379.86,195.13 381.27,182.50 382.68,218.54 384.09,198.84 385.50,225.12 386.91,198.08 388.32,226.36 389.73,196.80 391.14,192.12 392.55,223.42 393.96,183.81 395.37,220.93 396.78,211.40 398.19,217.86 399.60,191.80 401.01,186.54 402.42,194.14 403.83,188.27 405.24,218.42 406.65,188.77 408.06,203.07 409.47,180.11 410.88,183.86 412.29,169.32 413.70,226.21 415.11,196.16 416.52,184.65 417.93,226.07 419.34,229.81 420.75,226.79 422.16,212.74 423.57,211.01 424.98,186.59 426.39,217.46 427.80,215.45 429.21,170.54 430.62,174.67 432.03,243.98 433.44,165.27 434.85,215.63 436.26,165.27 437.67,168.77 439.08,176.76 440.49,176.48 441.90,165.27 443.31,179.36 444.72,173.90 446.13,185.55 447.54,210.47 448.95,205.94 450.36,205.18 451.77,168.77 453.18,167.37 454.59,165.27 456.00,188.28 457.41,198.38 458.82,205.83 460.23,193.11 461.64,189.44 463.05,195.21 464.46,166.48 465.87,215.60 467.28,199.28 468.69,227.83 470.10,192.87 471.51,247.73 472.92,226.65 474.33,188.79 475.74,186.94 477.15,181.69 478.56,234.42 479.97,230.69 481.38,188.68 482.79,223.52 484.20,225.95 485.61,198.15 487.02,230.09 488.43,197.94 489.84,187.56 491.25,212.07 492.66,229.90 494.07,179.52 495.48,226.17 496.89,192.85 498.30,231.71 499.71,185.88 501.12,189.41 502.53,193.70 503.94,183.99 505.35,194.01 506.76,188.03 508.17,189.49 509.58,193.18 510.99,218.13 512.40,192.39 513.81,199.91 515.22,248.58 516.63,226.93 518.04,194.41 519.45,216.74 520.86,236.77 522.27,181.71 523.68,212.33 525.09,217.44 526.50,180.27" fill="none" stroke="#8d93d2" stroke-width="1.7" stroke-linejoin="round"/><polyline points="33.00,201.87 34.41,169.99 35.82,223.85 37.23,230.38 38.64,187.98 40.05,187.26 41.46,181.40 42.87,166.39 44.28,200.14 45.69,186.35 47.10,187.16 48.51,190.95 49.92,191.81 51.33,233.34 52.74,198.24 54.15,236.69 55.56,194.10 56.97,205.72 58.38,217.99 59.79,247.48 61.20,197.62 62.61,223.27 64.02,230.63 65.43,192.04 66.84,215.19 68.25,191.57 69.66,191.80 71.07,177.69 72.48,178.52 73.89,172.04 75.30,221.91 76.71,185.21 78.12,187.47 79.53,248.96 80.94,200.93 82.35,165.27 83.76,204.69 85.17,188.76 86.58,224.47 87.99,175.35 89.40,188.81 90.81,193.53 92.22,194.96 93.63,206.81 95.04,186.46 96.45,193.64 97.86,191.93 99.27,194.66 100.68,232.09 102.09,193.87 103.50,218.98 104.91,226.40 106.32,187.55 107.73,208.76 109.14,226.99 110.55,232.14 111.96,228.70 113.37,178.28 114.78,196.37 116.19,188.21 117.60,213.17 119.01,196.57 120.42,255.50 121.83,188.87 123.24,198.85 124.65,195.35 126.06,238.15 127.47,252.88 128.88,231.19 130.29,211.07 131.70,222.75 133.11,232.80 134.52,216.56 135.93,213.77 137.34,196.57 138.75,175.89 140.16,216.36 141.57,198.64 142.98,220.81 144.39,187.79 145.80,181.55 147.21,180.03 148.62,184.39 150.03,194.08 151.44,224.90 152.85,249.02 154.26,212.33 155.67,194.95 157.08,261.77 158.49,185.39 159.90,231.49 161.31,196.74 162.72,179.11 164.13,219.83 165.54,210.58 166.95,184.10 168.36,209.69 169.77,225.55 171.18,193.91 172.59,168.60 174.00,176.48 175.41,221.64 176.82,195.49 178.23,192.02 179.64,188.85 181.05,186.30 182.46,184.13 183.87,235.02 185.28,233.02 186.69,220.98 188.10,222.75 189.51,192.09 190.92,184.48 192.33,199.23 193.74,199.48 195.15,165.27 196.56,191.87 197.97,173.22 199.38,205.64 200.79,249.12 202.20,184.28 203.61,219.86 205.02,170.91 206.43,179.69 207.84,193.49 209.25,215.55 210.66,189.90 212.07,194.77 213.48,228.90 214.89,217.15 216.30,226.42 217.71,250.46 219.12,218.52 220.53,237.41 221.94,180.78 223.35,193.62 224.76,268.29 226.17,219.30 227.58,237.62 228.99,206.05 230.40,204.14 231.81,225.00 233.22,195.51 234.63,241.07 236.04,177.98 237.45,194.79 238.86,189.44 240.27,192.81 241.68,192.85 243.09,165.27 244.50,218.39 245.91,191.51 247.32,207.73 248.73,194.53 250.14,236.25 251.55,177.23 252.96,223.95 254.37,171.72 255.78,214.80 257.19,205.08 258.60,217.02 260.01,215.25 261.42,242.88 262.83,215.83 264.24,234.70 265.65,178.16 267.06,199.43 268.47,191.41 269.88,172.35 271.29,189.44 272.70,192.61 274.11,197.76 275.52,223.36 276.93,188.63 278.34,171.38 279.75,206.44 281.16,191.12 282.57,231.15 283.98,168.31 285.39,172.77 286.80,193.82 288.21,192.13 289.62,172.10 291.03,187.86 292.44,227.00 293.85,214.92 295.26,227.76 296.67,205.62 298.08,182.75 299.49,203.06 300.90,220.98 302.31,262.16 303.72,195.00 305.13,230.17 306.54,189.46 307.95,222.17 309.36,185.97 310.77,184.38 312.18,165.96 313.59,187.37 315.00,183.24 316.41,180.19 317.82,202.82 319.23,193.31 320.64,188.63 322.05,222.83 323.46,183.22 324.87,249.65 326.28,202.51 327.69,188.68 329.10,198.55 330.51,174.10 331.92,196.39 333.33,219.21 334.74,215.91 336.15,190.50 337.56,183.62 338.97,173.37 340.38,229.91 341.79,218.87 343.20,199.79 344.61,171.51 346.02,195.75 347.43,240.87 348.84,219.14 350.25,199.75 351.66,223.13 353.07,216.78 354.48,190.49 355.89,198.27 357.30,199.95 358.71,236.08 360.12,176.23 361.53,234.36 362.94,200.79 364.35,189.43 365.76,203.68 367.17,201.02 368.58,242.13 369.99,183.81 371.40,214.35 372.81,260.51 374.22,198.89 375.63,203.27 377.04,211.11 378.45,238.91 379.86,195.13 381.27,182.50 382.68,218.54 384.09,198.84 385.50,225.12 386.91,198.08 388.32,226.36 389.73,196.80 391.14,192.12 392.55,223.42 393.96,183.81 395.37,220.93 396.78,211.40 398.19,217.86 399.60,191.80 401.01,186.54 402.42,194.14 403.83,188.27 405.24,218.42 406.65,188.77 408.06,203.07 409.47,180.11 410.88,183.86 412.29,169.32 413.70,226.21 415.11,196.16 416.52,184.65 417.93,226.07 419.34,229.81 420.75,226.79 422.16,212.74 423.57,211.01 424.98,186.59 426.39,217.46 427.80,215.45 429.21,170.54 430.62,174.67 432.03,243.98 433.44,165.27 434.85,215.63 436.26,165.27 437.67,168.77 439.08,176.76 440.49,176.48 441.90,165.27 443.31,179.36 444.72,173.90 446.13,185.55 447.54,210.47 448.95,205.94 450.36,205.18 451.77,168.77 453.18,167.37 454.59,165.27 456.00,188.28 457.41,198.38 458.82,205.83 460.23,193.11 461.64,189.44 463.05,195.21 464.46,166.48 465.87,215.60 467.28,199.28 468.69,227.83 470.10,192.87 471.51,247.73 472.92,226.65 474.33,188.79 475.74,186.94 477.15,181.69 478.56,234.42 479.97,230.69 481.38,188.68 482.79,223.52 484.20,225.95 485.61,198.15 487.02,230.09 488.43,197.94 489.84,187.56 491.25,212.07 492.66,229.90 494.07,179.52 495.48,226.17 496.89,192.85 498.30,231.71 499.71,185.88 501.12,189.41 502.53,193.70 503.94,183.99 505.35,194.01 506.76,188.03 508.17,189.49 509.58,193.18 510.99,218.13 512.40,192.39 513.81,199.91 515.22,248.58 516.63,226.93 518.04,194.41 519.45,216.74 520.86,236.77 522.27,181.71 523.68,212.33 525.09,217.44 526.50,180.27" fill="none" stroke="#ad7cc3" stroke-width="1.5" stroke-linejoin="round"/><path d="M33 16.5 H542.5 V288.5" fill="none" stroke="#666" stroke-width="1"/><line x1="33" y1="16" x2="33" y2="293.5" stroke="#111" stroke-width="1.6"/><line x1="29" y1="288.5" x2="543" y2="288.5" stroke="#111" stroke-width="1.6"/><line x1="28" y1="16.00" x2="33" y2="16.00" stroke="#111" stroke-width="1.3"/><text x="24" y="19.40" text-anchor="end" font-family="Liberation Sans" font-size="12.3" fill="#404040" textLength="11.5" lengthAdjust="spacingAndGlyphs">20</text><line x1="28" y1="49.17" x2="33" y2="49.17" stroke="#111" stroke-width="1.3"/><text x="24" y="52.57" text-anchor="end" font-family="Liberation Sans" font-size="12.3" fill="#404040" textLength="11.5" lengthAdjust="spacingAndGlyphs">18</text><line x1="28" y1="82.34" x2="33" y2="82.34" stroke="#111" stroke-width="1.3"/><text x="24" y="85.74" text-anchor="end" font-family="Liberation Sans" font-size="12.3" fill="#404040" textLength="11.5" lengthAdjust="spacingAndGlyphs">16</text><line x1="28" y1="115.51" x2="33" y2="115.51" stroke="#111" stroke-width="1.3"/><text x="24" y="118.91" text-anchor="end" font-family="Liberation Sans" font-size="12.3" fill="#404040" textLength="11.5" lengthAdjust="spacingAndGlyphs">14</text><line x1="28" y1="148.68" x2="33" y2="148.68" stroke="#111" stroke-width="1.3"/><text x="24" y="152.08" text-anchor="end" font-family="Liberation Sans" font-size="12.3" fill="#404040" textLength="11.5" lengthAdjust="spacingAndGlyphs">12</text><line x1="28" y1="181.86" x2="33" y2="181.86" stroke="#111" stroke-width="1.3"/><text x="24" y="185.26" text-anchor="end" font-family="Liberation Sans" font-size="12.3" fill="#404040" textLength="11.5" lengthAdjust="spacingAndGlyphs">10</text><line x1="28" y1="215.03" x2="33" y2="215.03" stroke="#111" stroke-width="1.3"/><text x="24" y="218.43" text-anchor="end" font-family="Liberation Sans" font-size="12.3" fill="#404040" textLength="5.6" lengthAdjust="spacingAndGlyphs">8</text><line x1="28" y1="248.20" x2="33" y2="248.20" stroke="#111" stroke-width="1.3"/><text x="24" y="251.60" text-anchor="end" font-family="Liberation Sans" font-size="12.3" fill="#404040" textLength="5.6" lengthAdjust="spacingAndGlyphs">6</text><line x1="28" y1="281.37" x2="33" y2="281.37" stroke="#111" stroke-width="1.3"/><text x="24" y="284.77" text-anchor="end" font-family="Liberation Sans" font-size="12.3" fill="#404040" textLength="5.6" lengthAdjust="spacingAndGlyphs">4</text><line x1="30.5" y1="16.00" x2="33" y2="16.00" stroke="#111" stroke-width="1.2"/><line x1="30.5" y1="22.63" x2="33" y2="22.63" stroke="#111" stroke-width="1.2"/><line x1="30.5" y1="29.27" x2="33" y2="29.27" stroke="#111" stroke-width="1.2"/><line x1="30.5" y1="35.90" x2="33" y2="35.90" stroke="#111" stroke-width="1.2"/><line x1="30.5" y1="42.54" x2="33" y2="42.54" stroke="#111" stroke-width="1.2"/><line x1="30.5" y1="49.17" x2="33" y2="49.17" stroke="#111" stroke-width="1.2"/><line x1="30.5" y1="55.81" x2="33" y2="55.81" stroke="#111" stroke-width="1.2"/><line x1="30.5" y1="62.44" x2="33" y2="62.44" stroke="#111" stroke-width="1.2"/><line x1="30.5" y1="69.07" x2="33" y2="69.07" stroke="#111" stroke-width="1.2"/><line x1="30.5" y1="75.71" x2="33" y2="75.71" stroke="#111" stroke-width="1.2"/><line x1="30.5" y1="82.34" x2="33" y2="82.34" stroke="#111" stroke-width="1.2"/><line x1="30.5" y1="88.98" x2="33" y2="88.98" stroke="#111" stroke-width="1.2"/><line x1="30.5" y1="95.61" x2="33" y2="95.61" stroke="#111" stroke-width="1.2"/><line x1="30.5" y1="102.24" x2="33" y2="102.24" stroke="#111" stroke-width="1.2"/><line x1="30.5" y1="108.88" x2="33" y2="108.88" stroke="#111" stroke-width="1.2"/><line x1="30.5" y1="115.51" x2="33" y2="115.51" stroke="#111" stroke-width="1.2"/><line x1="30.5" y1="122.15" x2="33" y2="122.15" stroke="#111" stroke-width="1.2"/><line x1="30.5" y1="128.78" x2="33" y2="128.78" stroke="#111" stroke-width="1.2"/><line x1="30.5" y1="135.42" x2="33" y2="135.42" stroke="#111" stroke-width="1.2"/><line x1="30.5" y1="142.05" x2="33" y2="142.05" stroke="#111" stroke-width="1.2"/><line x1="30.5" y1="148.68" x2="33" y2="148.68" stroke="#111" stroke-width="1.2"/><line x1="30.5" y1="155.32" x2="33" y2="155.32" stroke="#111" stroke-width="1.2"/><line x1="30.5" y1="161.95" x2="33" y2="161.95" stroke="#111" stroke-width="1.2"/><line x1="30.5" y1="168.59" x2="33" y2="168.59" stroke="#111" stroke-width="1.2"/><line x1="30.5" y1="175.22" x2="33" y2="175.22" stroke="#111" stroke-width="1.2"/><line x1="30.5" y1="181.86" x2="33" y2="181.86" stroke="#111" stroke-width="1.2"/><line x1="30.5" y1="188.49" x2="33" y2="188.49" stroke="#111" stroke-width="1.2"/><line x1="30.5" y1="195.12" x2="33" y2="195.12" stroke="#111" stroke-width="1.2"/><line x1="30.5" y1="201.76" x2="33" y2="201.76" stroke="#111" stroke-width="1.2"/><line x1="30.5" y1="208.39" x2="33" y2="208.39" stroke="#111" stroke-width="1.2"/><line x1="30.5" y1="215.03" x2="33" y2="215.03" stroke="#111" stroke-width="1.2"/><line x1="30.5" y1="221.66" x2="33" y2="221.66" stroke="#111" stroke-width="1.2"/><line x1="30.5" y1="228.29" x2="33" y2="228.29" stroke="#111" stroke-width="1.2"/><line x1="30.5" y1="234.93" x2="33" y2="234.93" stroke="#111" stroke-width="1.2"/><line x1="30.5" y1="241.56" x2="33" y2="241.56" stroke="#111" stroke-width="1.2"/><line x1="30.5" y1="248.20" x2="33" y2="248.20" stroke="#111" stroke-width="1.2"/><line x1="30.5" y1="254.83" x2="33" y2="254.83" stroke="#111" stroke-width="1.2"/><line x1="30.5" y1="261.47" x2="33" y2="261.47" stroke="#111" stroke-width="1.2"/><line x1="30.5" y1="268.10" x2="33" y2="268.10" stroke="#111" stroke-width="1.2"/><line x1="30.5" y1="274.73" x2="33" y2="274.73" stroke="#111" stroke-width="1.2"/><line x1="30.5" y1="281.37" x2="33" y2="281.37" stroke="#111" stroke-width="1.2"/><line x1="30.5" y1="288.00" x2="33" y2="288.00" stroke="#111" stroke-width="1.2"/><line x1="33.00" y1="288.5" x2="33.00" y2="293.5" stroke="#111" stroke-width="1.3"/><text x="33.00" y="304.50" text-anchor="middle" font-family="Liberation Sans" font-size="12.3" fill="#404040" textLength="5.6" lengthAdjust="spacingAndGlyphs">0</text><line x1="47.10" y1="288.5" x2="47.10" y2="291.0" stroke="#111" stroke-width="1.3"/><line x1="61.20" y1="288.5" x2="61.20" y2="291.0" stroke="#111" stroke-width="1.3"/><line x1="75.30" y1="288.5" x2="75.30" y2="291.0" stroke="#111" stroke-width="1.3"/><line x1="89.40" y1="288.5" x2="89.40" y2="291.0" stroke="#111" stroke-width="1.3"/><line x1="103.50" y1="288.5" x2="103.50" y2="293.5" stroke="#111" stroke-width="1.3"/><text x="103.50" y="304.50" text-anchor="middle" font-family="Liberation Sans" font-size="12.3" fill="#404040" textLength="11.5" lengthAdjust="spacingAndGlyphs">50</text><line x1="117.60" y1="288.5" x2="117.60" y2="291.0" stroke="#111" stroke-width="1.3"/><line x1="131.70" y1="288.5" x2="131.70" y2="291.0" stroke="#111" stroke-width="1.3"/><line x1="145.80" y1="288.5" x2="145.80" y2="291.0" stroke="#111" stroke-width="1.3"/><line x1="159.90" y1="288.5" x2="159.90" y2="291.0" stroke="#111" stroke-width="1.3"/><line x1="174.00" y1="288.5" x2="174.00" y2="293.5" stroke="#111" stroke-width="1.3"/><text x="174.00" y="304.50" text-anchor="middle" font-family="Liberation Sans" font-size="12.3" fill="#404040" textLength="17.4" lengthAdjust="spacingAndGlyphs">100</text><line x1="188.10" y1="288.5" x2="188.10" y2="291.0" stroke="#111" stroke-width="1.3"/><line x1="202.20" y1="288.5" x2="202.20" y2="291.0" stroke="#111" stroke-width="1.3"/><line x1="216.30" y1="288.5" x2="216.30" y2="291.0" stroke="#111" stroke-width="1.3"/><line x1="230.40" y1="288.5" x2="230.40" y2="291.0" stroke="#111" stroke-width="1.3"/><line x1="244.50" y1="288.5" x2="244.50" y2="293.5" stroke="#111" stroke-width="1.3"/><text x="244.50" y="304.50" text-anchor="middle" font-family="Liberation Sans" font-size="12.3" fill="#404040" textLength="17.4" lengthAdjust="spacingAndGlyphs">150</text><line x1="258.60" y1="288.5" x2="258.60" y2="291.0" stroke="#111" stroke-width="1.3"/><line x1="272.70" y1="288.5" x2="272.70" y2="291.0" stroke="#111" stroke-width="1.3"/><line x1="286.80" y1="288.5" x2="286.80" y2="291.0" stroke="#111" stroke-width="1.3"/><line x1="300.90" y1="288.5" x2="300.90" y2="291.0" stroke="#111" stroke-width="1.3"/><line x1="315.00" y1="288.5" x2="315.00" y2="293.5" stroke="#111" stroke-width="1.3"/><text x="315.00" y="304.50" text-anchor="middle" font-family="Liberation Sans" font-size="12.3" fill="#404040" textLength="17.4" lengthAdjust="spacingAndGlyphs">200</text><line x1="329.10" y1="288.5" x2="329.10" y2="291.0" stroke="#111" stroke-width="1.3"/><line x1="343.20" y1="288.5" x2="343.20" y2="291.0" stroke="#111" stroke-width="1.3"/><line x1="357.30" y1="288.5" x2="357.30" y2="291.0" stroke="#111" stroke-width="1.3"/><line x1="371.40" y1="288.5" x2="371.40" y2="291.0" stroke="#111" stroke-width="1.3"/><line x1="385.50" y1="288.5" x2="385.50" y2="293.5" stroke="#111" stroke-width="1.3"/><text x="385.50" y="304.50" text-anchor="middle" font-family="Liberation Sans" font-size="12.3" fill="#404040" textLength="17.4" lengthAdjust="spacingAndGlyphs">250</text><line x1="399.60" y1="288.5" x2="399.60" y2="291.0" stroke="#111" stroke-width="1.3"/><line x1="413.70" y1="288.5" x2="413.70" y2="291.0" stroke="#111" stroke-width="1.3"/><line x1="427.80" y1="288.5" x2="427.80" y2="291.0" stroke="#111" stroke-width="1.3"/><line x1="441.90" y1="288.5" x2="441.90" y2="291.0" stroke="#111" stroke-width="1.3"/><line x1="456.00" y1="288.5" x2="456.00" y2="293.5" stroke="#111" stroke-width="1.3"/><text x="456.00" y="304.50" text-anchor="middle" font-family="Liberation Sans" font-size="12.3" fill="#404040" textLength="17.4" lengthAdjust="spacingAndGlyphs">300</text><line x1="470.10" y1="288.5" x2="470.10" y2="291.0" stroke="#111" stroke-width="1.3"/><line x1="484.20" y1="288.5" x2="484.20" y2="291.0" stroke="#111" stroke-width="1.3"/><line x1="498.30" y1="288.5" x2="498.30" y2="291.0" stroke="#111" stroke-width="1.3"/><line x1="512.40" y1="288.5" x2="512.40" y2="291.0" stroke="#111" stroke-width="1.3"/><line x1="526.50" y1="288.5" x2="526.50" y2="293.5" stroke="#111" stroke-width="1.3"/><text x="526.50" y="304.50" text-anchor="middle" font-family="Liberation Sans" font-size="12.3" fill="#404040" textLength="17.4" lengthAdjust="spacingAndGlyphs">350</text><line x1="540.60" y1="288.5" x2="540.60" y2="291.0" stroke="#111" stroke-width="1.3"/><rect x="38.5" y="20.5" width="98" height="26" fill="#aaa" opacity="0.5" transform="translate(2,2)"/><rect x="38.5" y="20.5" width="98" height="26" fill="#f4f22e" stroke="#5d5a1c" stroke-width="1.2"/><text x="44" y="37" font-family="Liberation Sans" font-size="12" fill="#333">Amps per gauge</text></svg><svg style="position:absolute;left:615px;top:478px" width="555" height="316" viewBox="0 0 555 316"><rect width="555" height="316" fill="#fff"/><line x1="39.39999999999998" y1="16.00" x2="542" y2="16.00" stroke="#e4e4e4" stroke-width="1"/><line x1="39.39999999999998" y1="43.25" x2="542" y2="43.25" stroke="#e4e4e4" stroke-width="1"/><line x1="39.39999999999998" y1="70.50" x2="542" y2="70.50" stroke="#e4e4e4" stroke-width="1"/><line x1="39.39999999999998" y1="97.75" x2="542" y2="97.75" stroke="#e4e4e4" stroke-width="1"/><line x1="39.39999999999998" y1="125.00" x2="542" y2="125.00" stroke="#e4e4e4" stroke-width="1"/><line x1="39.39999999999998" y1="152.25" x2="542" y2="152.25" stroke="#e4e4e4" stroke-width="1"/><line x1="39.39999999999998" y1="179.50" x2="542" y2="179.50" stroke="#e4e4e4" stroke-width="1"/><line x1="39.39999999999998" y1="206.75" x2="542" y2="206.75" stroke="#e4e4e4" stroke-width="1"/><line x1="39.39999999999998" y1="234.00" x2="542" y2="234.00" stroke="#e4e4e4" stroke-width="1"/><line x1="39.39999999999998" y1="261.25" x2="542" y2="261.25" stroke="#e4e4e4" stroke-width="1"/><line x1="39.39999999999998" y1="288.50" x2="542" y2="288.50" stroke="#e4e4e4" stroke-width="1"/><line x1="108.91" y1="16" x2="108.91" y2="288.5" stroke="#e4e4e4" stroke-width="1"/><line x1="178.43" y1="16" x2="178.43" y2="288.5" stroke="#e4e4e4" stroke-width="1"/><line x1="247.94" y1="16" x2="247.94" y2="288.5" stroke="#e4e4e4" stroke-width="1"/><line x1="317.46" y1="16" x2="317.46" y2="288.5" stroke="#e4e4e4" stroke-width="1"/><line x1="386.97" y1="16" x2="386.97" y2="288.5" stroke="#e4e4e4" stroke-width="1"/><line x1="456.49" y1="16" x2="456.49" y2="288.5" stroke="#e4e4e4" stroke-width="1"/><line x1="526.00" y1="16" x2="526.00" y2="288.5" stroke="#e4e4e4" stroke-width="1"/><polyline points="39.40,185.97 40.79,185.89 42.18,185.84 43.57,185.75 44.96,185.84 46.35,185.72 47.74,186.19 49.13,185.94 50.52,185.66 51.91,185.80 53.30,185.65 54.69,186.06 56.08,185.85 57.47,185.96 58.86,185.78 60.25,185.74 61.64,186.03 63.03,185.90 64.43,185.85 65.82,185.49 67.21,185.55 68.60,185.87 69.99,185.50 71.38,185.84 72.77,185.56 74.16,185.82 75.55,185.87 76.94,185.38 78.33,185.72 79.72,185.70 81.11,185.26 82.50,185.31 83.89,185.61 85.28,185.22 86.67,185.44 88.06,185.34 89.45,185.58 90.84,185.17 92.23,185.29 93.62,185.12 95.01,185.14 96.40,185.45 97.79,185.40 99.18,185.49 100.57,185.48 101.96,185.51 103.35,185.36 104.74,185.18 106.13,185.49 107.52,185.10 108.91,185.27 110.30,185.27 111.69,184.98 113.09,185.14 114.48,185.22 115.87,185.11 117.26,184.97 118.65,185.31 120.04,184.79 121.43,185.29 122.82,184.88 124.21,184.81 125.60,185.24 126.99,184.80 128.38,185.02 129.77,184.88 131.16,185.18 132.55,185.14 133.94,185.05 135.33,184.61 136.72,185.01 138.11,184.68 139.50,184.57 140.89,184.55 142.28,184.86 143.67,184.83 145.06,184.72 146.45,184.57 147.84,184.92 149.23,184.55 150.62,184.51 152.01,184.46 153.40,184.89 154.79,184.38 156.18,184.82 157.57,184.67 158.96,184.51 160.35,184.32 161.75,184.62 163.14,184.28 164.53,184.47 165.92,184.58 167.31,184.56 168.70,184.62 170.09,184.66 171.48,184.60 172.87,184.29 174.26,184.11 175.65,184.55 177.04,184.59 178.43,184.06 179.82,184.29 181.21,184.34 182.60,184.42 183.99,184.21 185.38,184.06 186.77,184.25 188.16,184.25 189.55,184.43 190.94,183.95 192.33,184.41 193.72,184.14 195.11,183.94 196.50,184.31 197.89,183.96 199.28,183.83 200.67,183.98 202.06,183.88 203.45,184.23 204.84,184.04 206.23,184.18 207.62,183.78 209.01,184.06 210.41,183.96 211.80,183.64 213.19,183.71 214.58,183.62 215.97,183.89 217.36,183.85 218.75,183.71 220.14,183.82 221.53,183.91 222.92,183.83 224.31,183.95 225.70,183.81 227.09,183.46 228.48,183.46 229.87,183.62 231.26,183.68 232.65,183.75 234.04,183.87 235.43,183.75 236.82,183.45 238.21,183.39 239.60,183.65 240.99,183.40 242.38,183.39 243.77,183.42 245.16,183.42 246.55,183.35 247.94,183.55 249.33,183.34 250.72,183.56 252.11,183.43 253.50,183.26 254.89,183.28 256.28,183.48 257.67,183.11 259.07,183.25 260.46,183.27 261.85,183.57 263.24,183.26 264.63,183.40 266.02,183.15 267.41,183.25 268.80,183.04 270.19,183.12 271.58,183.02 272.97,183.25 274.36,183.07 275.75,183.00 277.14,182.93 278.53,183.18 279.92,182.89 281.31,182.86 282.70,182.94 284.09,182.77 285.48,182.76 286.87,182.98 288.26,182.96 289.65,183.14 291.04,182.76 292.43,182.68 293.82,182.92 295.21,182.78 296.60,182.75 297.99,182.73 299.38,183.02 300.77,182.67 302.16,182.76 303.55,182.70 304.94,182.81 306.33,182.68 307.73,182.58 309.12,182.64 310.51,182.58 311.90,182.94 313.29,182.85 314.68,182.68 316.07,182.55 317.46,182.77 318.85,182.50 320.24,182.51 321.63,182.81 323.02,182.56 324.41,182.68 325.80,182.75 327.19,182.69 328.58,182.58 329.97,182.63 331.36,182.61 332.75,182.68 334.14,182.43 335.53,182.46 336.92,182.31 338.31,182.31 339.70,182.48 341.09,182.10 342.48,182.58 343.87,182.34 345.26,182.39 346.65,182.30 348.04,182.45 349.43,182.04 350.82,182.27 352.21,182.44 353.60,182.11 354.99,182.37 356.39,182.11 357.78,182.21 359.17,182.06 360.56,181.83 361.95,181.89 363.34,182.09 364.73,181.86 366.12,181.94 367.51,182.07 368.90,182.18 370.29,181.91 371.68,181.91 373.07,181.68 374.46,181.66 375.85,181.84 377.24,181.96 378.63,181.65 380.02,182.12 381.41,182.04 382.80,181.77 384.19,181.73 385.58,181.97 386.97,181.69 388.36,181.53 389.75,181.79 391.14,181.74 392.53,181.84 393.92,181.79 395.31,181.40 396.70,181.70 398.09,181.37 399.48,181.38 400.87,181.53 402.26,181.70 403.65,181.29 405.05,181.54 406.44,181.56 407.83,181.60 409.22,181.22 410.61,181.47 412.00,181.57 413.39,181.44 414.78,181.62 416.17,181.33 417.56,181.41 418.95,181.48 420.34,181.19 421.73,181.15 423.12,181.58 424.51,181.28 425.90,181.40 427.29,181.02 428.68,181.09 430.07,181.37 431.46,181.34 432.85,181.38 434.24,180.91 435.63,181.27 437.02,181.08 438.41,181.14 439.80,181.03 441.19,181.03 442.58,180.94 443.97,181.26 445.36,180.90 446.75,181.13 448.14,180.99 449.53,181.08 450.92,181.08 452.31,180.94 453.71,180.96 455.10,180.99 456.49,180.77 457.88,180.83 459.27,181.12 460.66,180.98 462.05,180.86 463.44,180.59 464.83,180.59 466.22,180.76 467.61,181.03 469.00,180.60 470.39,180.77 471.78,180.67 473.17,180.58 474.56,180.61 475.95,180.67 477.34,180.42 478.73,180.69 480.12,180.67 481.51,180.40 482.90,180.74 484.29,180.67 485.68,180.36 487.07,180.76 488.46,180.32 489.85,180.38 491.24,180.51 492.63,180.57 494.02,180.29 495.41,180.20 496.80,180.60 498.19,180.40 499.58,180.34 500.97,180.35 502.37,180.43 503.76,180.51 505.15,180.26 506.54,180.11 507.93,180.50 509.32,180.40 510.71,180.06 512.10,180.06 513.49,180.11 514.88,180.44 516.27,180.04 517.66,179.89 519.05,179.86 520.44,180.00 521.83,180.34 523.22,179.89 524.61,180.22 526.00,179.97" fill="none" stroke="#f2a97c" stroke-width="1.3"/><polyline points="39.40,197.24 40.79,197.35 42.18,197.65 43.57,197.55 44.96,197.19 46.35,197.59 47.74,197.33 49.13,197.42 50.52,197.54 51.91,197.27 53.30,197.57 54.69,197.52 56.08,197.35 57.47,197.51 58.86,197.50 60.25,197.20 61.64,197.09 63.03,197.00 64.43,197.39 65.82,197.21 67.21,197.26 68.60,197.09 69.99,197.13 71.38,196.87 72.77,197.16 74.16,197.32 75.55,196.95 76.94,197.23 78.33,196.96 79.72,197.01 81.11,196.77 82.50,196.95 83.89,196.90 85.28,197.07 86.67,196.90 88.06,197.05 89.45,196.76 90.84,196.87 92.23,197.06 93.62,196.99 95.01,196.90 96.40,196.69 97.79,196.97 99.18,196.67 100.57,196.68 101.96,196.98 103.35,196.64 104.74,196.94 106.13,196.90 107.52,196.63 108.91,196.81 110.30,196.45 111.69,196.65 113.09,196.71 114.48,196.44 115.87,196.84 117.26,196.45 118.65,196.80 120.04,196.73 121.43,196.27 122.82,196.41 124.21,196.64 125.60,196.68 126.99,196.20 128.38,196.35 129.77,196.25 131.16,196.60 132.55,196.32 133.94,196.45 135.33,196.50 136.72,196.43 138.11,196.26 139.50,196.39 140.89,196.35 142.28,196.47 143.67,196.08 145.06,196.16 146.45,196.06 147.84,196.25 149.23,196.00 150.62,196.17 152.01,196.11 153.40,196.10 154.79,196.00 156.18,196.17 157.57,196.31 158.96,196.33 160.35,196.22 161.75,196.30 163.14,195.82 164.53,196.02 165.92,195.86 167.31,196.25 168.70,195.98 170.09,195.74 171.48,195.87 172.87,195.95 174.26,195.92 175.65,196.10 177.04,196.05 178.43,196.04 179.82,195.90 181.21,195.88 182.60,195.59 183.99,195.97 185.38,195.90 186.77,195.87 188.16,195.92 189.55,195.84 190.94,195.85 192.33,195.70 193.72,195.93 195.11,195.42 196.50,195.71 197.89,195.38 199.28,195.50 200.67,195.49 202.06,195.59 203.45,195.31 204.84,195.75 206.23,195.43 207.62,195.62 209.01,195.40 210.41,195.35 211.80,195.64 213.19,195.60 214.58,195.68 215.97,195.56 217.36,195.62 218.75,195.43 220.14,195.10 221.53,195.42 222.92,195.43 224.31,195.33 225.70,195.41 227.09,195.15 228.48,195.14 229.87,195.43 231.26,195.37 232.65,195.12 234.04,194.96 235.43,195.10 236.82,195.20 238.21,194.89 239.60,195.40 240.99,195.35 242.38,194.95 243.77,195.13 245.16,195.31 246.55,195.02 247.94,194.77 249.33,195.01 250.72,195.08 252.11,195.20 253.50,195.20 254.89,194.73 256.28,194.94 257.67,194.68 259.07,195.14 260.46,195.03 261.85,195.11 263.24,194.91 264.63,195.08 266.02,194.95 267.41,194.85 268.80,194.89 270.19,195.02 271.58,195.01 272.97,194.48 274.36,194.90 275.75,194.70 277.14,194.74 278.53,194.66 279.92,194.88 281.31,194.74 282.70,194.84 284.09,194.58 285.48,194.36 286.87,194.52 288.26,194.36 289.65,194.70 291.04,194.79 292.43,194.49 293.82,194.50 295.21,194.44 296.60,194.53 297.99,194.38 299.38,194.30 300.77,194.19 302.16,194.50 303.55,194.41 304.94,194.18 306.33,194.50 307.73,194.54 309.12,194.42 310.51,194.52 311.90,194.13 313.29,194.09 314.68,194.35 316.07,194.43 317.46,194.44 318.85,194.34 320.24,194.41 321.63,194.20 323.02,194.11 324.41,194.27 325.80,194.36 327.19,193.99 328.58,194.33 329.97,194.23 331.36,194.17 332.75,194.10 334.14,194.24 335.53,194.05 336.92,194.09 338.31,193.83 339.70,193.92 341.09,193.72 342.48,193.84 343.87,193.76 345.26,193.85 346.65,193.90 348.04,193.68 349.43,193.75 350.82,193.57 352.21,193.68 353.60,193.68 354.99,193.90 356.39,193.59 357.78,193.80 359.17,193.93 360.56,193.94 361.95,193.87 363.34,193.80 364.73,193.56 366.12,193.76 367.51,193.86 368.90,193.47 370.29,193.56 371.68,193.83 373.07,193.81 374.46,193.75 375.85,193.61 377.24,193.32 378.63,193.25 380.02,193.42 381.41,193.61 382.80,193.49 384.19,193.51 385.58,193.51 386.97,193.66 388.36,193.34 389.75,193.19 391.14,193.22 392.53,193.55 393.92,193.30 395.31,193.48 396.70,193.17 398.09,193.30 399.48,193.01 400.87,193.07 402.26,193.43 403.65,193.30 405.05,192.96 406.44,193.19 407.83,193.19 409.22,193.17 410.61,192.97 412.00,192.87 413.39,193.07 414.78,192.81 416.17,193.00 417.56,193.25 418.95,192.85 420.34,193.05 421.73,193.23 423.12,192.71 424.51,193.21 425.90,192.90 427.29,192.93 428.68,192.70 430.07,192.95 431.46,193.03 432.85,192.98 434.24,193.00 435.63,192.79 437.02,192.89 438.41,192.66 439.80,192.92 441.19,192.84 442.58,192.88 443.97,192.46 445.36,192.53 446.75,192.50 448.14,192.61 449.53,192.72 450.92,192.84 452.31,192.45 453.71,192.62 455.10,192.85 456.49,192.76 457.88,192.78 459.27,192.43 460.66,192.31 462.05,192.68 463.44,192.34 464.83,192.58 466.22,192.37 467.61,192.25 469.00,192.37 470.39,192.25 471.78,192.47 473.17,192.65 474.56,192.36 475.95,192.30 477.34,192.51 478.73,192.38 480.12,192.40 481.51,192.54 482.90,192.37 484.29,192.32 485.68,192.25 487.07,192.11 488.46,192.26 489.85,191.92 491.24,192.00 492.63,191.92 494.02,192.03 495.41,192.03 496.80,192.09 498.19,191.93 499.58,192.15 500.97,192.01 502.37,191.94 503.76,192.01 505.15,192.13 506.54,192.22 507.93,192.20 509.32,192.04 510.71,191.90 512.10,191.78 513.49,191.79 514.88,192.00 516.27,191.64 517.66,191.98 519.05,191.73 520.44,192.06 521.83,191.67 523.22,191.70 524.61,191.53 526.00,191.55" fill="none" stroke="#5b9bd5" stroke-width="1.3"/><polyline points="39.40,224.36 40.79,224.27 42.18,224.31 43.57,224.36 44.96,224.57 46.35,224.39 47.74,224.17 49.13,224.52 50.52,224.10 51.91,224.33 53.30,224.40 54.69,224.60 56.08,224.37 57.47,224.48 58.86,224.20 60.25,224.06 61.64,224.04 63.03,224.19 64.43,224.30 65.82,224.44 67.21,224.11 68.60,224.17 69.99,224.07 71.38,224.24 72.77,223.95 74.16,224.31 75.55,224.24 76.94,224.25 78.33,224.05 79.72,223.88 81.11,224.27 82.50,224.00 83.89,223.92 85.28,224.20 86.67,224.28 88.06,223.99 89.45,223.83 90.84,223.80 92.23,223.86 93.62,224.02 95.01,224.00 96.40,223.94 97.79,223.72 99.18,224.03 100.57,224.03 101.96,223.84 103.35,223.64 104.74,224.05 106.13,224.12 107.52,224.06 108.91,223.81 110.30,223.77 111.69,223.99 113.09,223.97 114.48,223.74 115.87,223.70 117.26,223.66 118.65,223.63 120.04,223.98 121.43,223.74 122.82,223.53 124.21,223.45 125.60,223.79 126.99,223.49 128.38,223.59 129.77,223.42 131.16,223.79 132.55,223.52 133.94,223.43 135.33,223.62 136.72,223.81 138.11,223.75 139.50,223.75 140.89,223.78 142.28,223.73 143.67,223.47 145.06,223.73 146.45,223.36 147.84,223.36 149.23,223.31 150.62,223.30 152.01,223.34 153.40,223.21 154.79,223.18 156.18,223.35 157.57,223.15 158.96,223.61 160.35,223.60 161.75,223.60 163.14,223.51 164.53,223.41 165.92,223.35 167.31,223.22 168.70,223.17 170.09,223.52 171.48,223.33 172.87,223.24 174.26,223.32 175.65,223.45 177.04,223.18 178.43,223.29 179.82,223.10 181.21,223.19 182.60,222.93 183.99,222.92 185.38,223.39 186.77,223.00 188.16,223.01 189.55,223.23 190.94,223.31 192.33,223.10 193.72,223.16 195.11,222.94 196.50,222.83 197.89,223.11 199.28,223.14 200.67,223.02 202.06,222.90 203.45,222.84 204.84,222.94 206.23,223.08 207.62,223.04 209.01,222.75 210.41,222.92 211.80,223.16 213.19,222.95 214.58,223.04 215.97,222.79 217.36,223.10 218.75,222.98 220.14,223.06 221.53,222.84 222.92,222.55 224.31,222.78 225.70,222.86 227.09,222.54 228.48,222.99 229.87,222.83 231.26,222.57 232.65,223.00 234.04,222.57 235.43,222.78 236.82,222.96 238.21,222.82 239.60,222.69 240.99,222.72 242.38,222.63 243.77,222.87 245.16,222.77 246.55,222.35 247.94,222.63 249.33,222.60 250.72,222.79 252.11,222.68 253.50,222.30 254.89,222.43 256.28,222.51 257.67,222.75 259.07,222.55 260.46,222.33 261.85,222.50 263.24,222.41 264.63,222.23 266.02,222.35 267.41,222.35 268.80,222.66 270.19,222.65 271.58,222.24 272.97,222.42 274.36,222.15 275.75,222.17 277.14,222.11 278.53,222.39 279.92,222.04 281.31,222.16 282.70,222.07 284.09,222.46 285.48,222.10 286.87,222.29 288.26,221.98 289.65,221.95 291.04,222.36 292.43,222.24 293.82,222.31 295.21,222.19 296.60,222.27 297.99,222.05 299.38,222.34 300.77,222.30 302.16,222.13 303.55,222.33 304.94,222.15 306.33,221.85 307.73,221.85 309.12,222.21 310.51,222.30 311.90,221.84 313.29,221.76 314.68,221.94 316.07,222.18 317.46,222.11 318.85,221.73 320.24,221.71 321.63,222.19 323.02,222.09 324.41,221.95 325.80,222.02 327.19,221.75 328.58,221.94 329.97,221.71 331.36,222.04 332.75,221.82 334.14,221.56 335.53,221.70 336.92,222.02 338.31,222.00 339.70,221.69 341.09,221.83 342.48,221.82 343.87,221.75 345.26,221.68 346.65,221.46 348.04,221.84 349.43,221.65 350.82,221.80 352.21,221.63 353.60,221.52 354.99,221.83 356.39,221.63 357.78,221.50 359.17,221.87 360.56,221.44 361.95,221.62 363.34,221.56 364.73,221.49 366.12,221.38 367.51,221.76 368.90,221.51 370.29,221.75 371.68,221.55 373.07,221.56 374.46,221.72 375.85,221.56 377.24,221.46 378.63,221.34 380.02,221.18 381.41,221.47 382.80,221.37 384.19,221.26 385.58,221.12 386.97,221.10 388.36,221.07 389.75,221.43 391.14,221.49 392.53,221.06 393.92,221.52 395.31,221.30 396.70,221.13 398.09,221.23 399.48,221.30 400.87,220.99 402.26,221.32 403.65,221.17 405.05,221.01 406.44,221.37 407.83,221.24 409.22,221.15 410.61,221.10 412.00,221.28 413.39,221.14 414.78,221.34 416.17,221.31 417.56,221.16 418.95,221.26 420.34,220.79 421.73,221.17 423.12,221.15 424.51,220.86 425.90,220.87 427.29,221.12 428.68,220.80 430.07,220.89 431.46,221.01 432.85,220.87 434.24,221.06 435.63,221.04 437.02,220.69 438.41,220.92 439.80,220.66 441.19,221.04 442.58,221.05 443.97,221.08 445.36,220.69 446.75,220.78 448.14,221.07 449.53,221.04 450.92,220.60 452.31,220.77 453.71,220.55 455.10,220.99 456.49,220.68 457.88,220.92 459.27,220.58 460.66,220.63 462.05,220.61 463.44,220.81 464.83,220.41 466.22,220.85 467.61,220.86 469.00,220.51 470.39,220.82 471.78,220.82 473.17,220.60 474.56,220.48 475.95,220.34 477.34,220.42 478.73,220.76 480.12,220.44 481.51,220.31 482.90,220.70 484.29,220.34 485.68,220.60 487.07,220.56 488.46,220.71 489.85,220.29 491.24,220.41 492.63,220.18 494.02,220.41 495.41,220.56 496.80,220.52 498.19,220.48 499.58,220.10 500.97,220.49 502.37,220.54 503.76,220.38 505.15,220.52 506.54,220.32 507.93,220.20 509.32,220.17 510.71,220.42 512.10,220.42 513.49,220.22 514.88,220.10 516.27,220.22 517.66,220.14 519.05,219.94 520.44,220.35 521.83,220.27 523.22,220.13 524.61,220.10 526.00,219.88" fill="none" stroke="#6ab86a" stroke-width="1.3"/><path d="M39.39999999999998 16.5 H542.5 V288.5" fill="none" stroke="#666" stroke-width="1"/><line x1="39.39999999999998" y1="16" x2="39.39999999999998" y2="293.5" stroke="#111" stroke-width="1.6"/><line x1="35.39999999999998" y1="288.5" x2="543" y2="288.5" stroke="#111" stroke-width="1.6"/><line x1="34.39999999999998" y1="16.00" x2="39.39999999999998" y2="16.00" stroke="#111" stroke-width="1.3"/><text x="30.399999999999977" y="19.40" text-anchor="end" font-family="Liberation Sans" font-size="12.3" fill="#404040" textLength="17.4" lengthAdjust="spacingAndGlyphs">120</text><line x1="34.39999999999998" y1="43.25" x2="39.39999999999998" y2="43.25" stroke="#111" stroke-width="1.3"/><text x="30.399999999999977" y="46.65" text-anchor="end" font-family="Liberation Sans" font-size="12.3" fill="#404040" textLength="17.4" lengthAdjust="spacingAndGlyphs">110</text><line x1="34.39999999999998" y1="70.50" x2="39.39999999999998" y2="70.50" stroke="#111" stroke-width="1.3"/><text x="30.399999999999977" y="73.90" text-anchor="end" font-family="Liberation Sans" font-size="12.3" fill="#404040" textLength="17.4" lengthAdjust="spacingAndGlyphs">100</text><line x1="34.39999999999998" y1="97.75" x2="39.39999999999998" y2="97.75" stroke="#111" stroke-width="1.3"/><text x="30.399999999999977" y="101.15" text-anchor="end" font-family="Liberation Sans" font-size="12.3" fill="#404040" textLength="11.5" lengthAdjust="spacingAndGlyphs">90</text><line x1="34.39999999999998" y1="125.00" x2="39.39999999999998" y2="125.00" stroke="#111" stroke-width="1.3"/><text x="30.399999999999977" y="128.40" text-anchor="end" font-family="Liberation Sans" font-size="12.3" fill="#404040" textLength="11.5" lengthAdjust="spacingAndGlyphs">80</text><line x1="34.39999999999998" y1="152.25" x2="39.39999999999998" y2="152.25" stroke="#111" stroke-width="1.3"/><text x="30.399999999999977" y="155.65" text-anchor="end" font-family="Liberation Sans" font-size="12.3" fill="#404040" textLength="11.5" lengthAdjust="spacingAndGlyphs">70</text><line x1="34.39999999999998" y1="179.50" x2="39.39999999999998" y2="179.50" stroke="#111" stroke-width="1.3"/><text x="30.399999999999977" y="182.90" text-anchor="end" font-family="Liberation Sans" font-size="12.3" fill="#404040" textLength="11.5" lengthAdjust="spacingAndGlyphs">60</text><line x1="34.39999999999998" y1="206.75" x2="39.39999999999998" y2="206.75" stroke="#111" stroke-width="1.3"/><text x="30.399999999999977" y="210.15" text-anchor="end" font-family="Liberation Sans" font-size="12.3" fill="#404040" textLength="11.5" lengthAdjust="spacingAndGlyphs">50</text><line x1="34.39999999999998" y1="234.00" x2="39.39999999999998" y2="234.00" stroke="#111" stroke-width="1.3"/><text x="30.399999999999977" y="237.40" text-anchor="end" font-family="Liberation Sans" font-size="12.3" fill="#404040" textLength="11.5" lengthAdjust="spacingAndGlyphs">40</text><line x1="34.39999999999998" y1="261.25" x2="39.39999999999998" y2="261.25" stroke="#111" stroke-width="1.3"/><text x="30.399999999999977" y="264.65" text-anchor="end" font-family="Liberation Sans" font-size="12.3" fill="#404040" textLength="11.5" lengthAdjust="spacingAndGlyphs">30</text><line x1="34.39999999999998" y1="288.50" x2="39.39999999999998" y2="288.50" stroke="#111" stroke-width="1.3"/><text x="30.399999999999977" y="291.90" text-anchor="end" font-family="Liberation Sans" font-size="12.3" fill="#404040" textLength="11.5" lengthAdjust="spacingAndGlyphs">20</text><line x1="36.89999999999998" y1="16.00" x2="39.39999999999998" y2="16.00" stroke="#111" stroke-width="1.2"/><line x1="36.89999999999998" y1="21.45" x2="39.39999999999998" y2="21.45" stroke="#111" stroke-width="1.2"/><line x1="36.89999999999998" y1="26.90" x2="39.39999999999998" y2="26.90" stroke="#111" stroke-width="1.2"/><line x1="36.89999999999998" y1="32.35" x2="39.39999999999998" y2="32.35" stroke="#111" stroke-width="1.2"/><line x1="36.89999999999998" y1="37.80" x2="39.39999999999998" y2="37.80" stroke="#111" stroke-width="1.2"/><line x1="36.89999999999998" y1="43.25" x2="39.39999999999998" y2="43.25" stroke="#111" stroke-width="1.2"/><line x1="36.89999999999998" y1="48.70" x2="39.39999999999998" y2="48.70" stroke="#111" stroke-width="1.2"/><line x1="36.89999999999998" y1="54.15" x2="39.39999999999998" y2="54.15" stroke="#111" stroke-width="1.2"/><line x1="36.89999999999998" y1="59.60" x2="39.39999999999998" y2="59.60" stroke="#111" stroke-width="1.2"/><line x1="36.89999999999998" y1="65.05" x2="39.39999999999998" y2="65.05" stroke="#111" stroke-width="1.2"/><line x1="36.89999999999998" y1="70.50" x2="39.39999999999998" y2="70.50" stroke="#111" stroke-width="1.2"/><line x1="36.89999999999998" y1="75.95" x2="39.39999999999998" y2="75.95" stroke="#111" stroke-width="1.2"/><line x1="36.89999999999998" y1="81.40" x2="39.39999999999998" y2="81.40" stroke="#111" stroke-width="1.2"/><line x1="36.89999999999998" y1="86.85" x2="39.39999999999998" y2="86.85" stroke="#111" stroke-width="1.2"/><line x1="36.89999999999998" y1="92.30" x2="39.39999999999998" y2="92.30" stroke="#111" stroke-width="1.2"/><line x1="36.89999999999998" y1="97.75" x2="39.39999999999998" y2="97.75" stroke="#111" stroke-width="1.2"/><line x1="36.89999999999998" y1="103.20" x2="39.39999999999998" y2="103.20" stroke="#111" stroke-width="1.2"/><line x1="36.89999999999998" y1="108.65" x2="39.39999999999998" y2="108.65" stroke="#111" stroke-width="1.2"/><line x1="36.89999999999998" y1="114.10" x2="39.39999999999998" y2="114.10" stroke="#111" stroke-width="1.2"/><line x1="36.89999999999998" y1="119.55" x2="39.39999999999998" y2="119.55" stroke="#111" stroke-width="1.2"/><line x1="36.89999999999998" y1="125.00" x2="39.39999999999998" y2="125.00" stroke="#111" stroke-width="1.2"/><line x1="36.89999999999998" y1="130.45" x2="39.39999999999998" y2="130.45" stroke="#111" stroke-width="1.2"/><line x1="36.89999999999998" y1="135.90" x2="39.39999999999998" y2="135.90" stroke="#111" stroke-width="1.2"/><line x1="36.89999999999998" y1="141.35" x2="39.39999999999998" y2="141.35" stroke="#111" stroke-width="1.2"/><line x1="36.89999999999998" y1="146.80" x2="39.39999999999998" y2="146.80" stroke="#111" stroke-width="1.2"/><line x1="36.89999999999998" y1="152.25" x2="39.39999999999998" y2="152.25" stroke="#111" stroke-width="1.2"/><line x1="36.89999999999998" y1="157.70" x2="39.39999999999998" y2="157.70" stroke="#111" stroke-width="1.2"/><line x1="36.89999999999998" y1="163.15" x2="39.39999999999998" y2="163.15" stroke="#111" stroke-width="1.2"/><line x1="36.89999999999998" y1="168.60" x2="39.39999999999998" y2="168.60" stroke="#111" stroke-width="1.2"/><line x1="36.89999999999998" y1="174.05" x2="39.39999999999998" y2="174.05" stroke="#111" stroke-width="1.2"/><line x1="36.89999999999998" y1="179.50" x2="39.39999999999998" y2="179.50" stroke="#111" stroke-width="1.2"/><line x1="36.89999999999998" y1="184.95" x2="39.39999999999998" y2="184.95" stroke="#111" stroke-width="1.2"/><line x1="36.89999999999998" y1="190.40" x2="39.39999999999998" y2="190.40" stroke="#111" stroke-width="1.2"/><line x1="36.89999999999998" y1="195.85" x2="39.39999999999998" y2="195.85" stroke="#111" stroke-width="1.2"/><line x1="36.89999999999998" y1="201.30" x2="39.39999999999998" y2="201.30" stroke="#111" stroke-width="1.2"/><line x1="36.89999999999998" y1="206.75" x2="39.39999999999998" y2="206.75" stroke="#111" stroke-width="1.2"/><line x1="36.89999999999998" y1="212.20" x2="39.39999999999998" y2="212.20" stroke="#111" stroke-width="1.2"/><line x1="36.89999999999998" y1="217.65" x2="39.39999999999998" y2="217.65" stroke="#111" stroke-width="1.2"/><line x1="36.89999999999998" y1="223.10" x2="39.39999999999998" y2="223.10" stroke="#111" stroke-width="1.2"/><line x1="36.89999999999998" y1="228.55" x2="39.39999999999998" y2="228.55" stroke="#111" stroke-width="1.2"/><line x1="36.89999999999998" y1="234.00" x2="39.39999999999998" y2="234.00" stroke="#111" stroke-width="1.2"/><line x1="36.89999999999998" y1="239.45" x2="39.39999999999998" y2="239.45" stroke="#111" stroke-width="1.2"/><line x1="36.89999999999998" y1="244.90" x2="39.39999999999998" y2="244.90" stroke="#111" stroke-width="1.2"/><line x1="36.89999999999998" y1="250.35" x2="39.39999999999998" y2="250.35" stroke="#111" stroke-width="1.2"/><line x1="36.89999999999998" y1="255.80" x2="39.39999999999998" y2="255.80" stroke="#111" stroke-width="1.2"/><line x1="36.89999999999998" y1="261.25" x2="39.39999999999998" y2="261.25" stroke="#111" stroke-width="1.2"/><line x1="36.89999999999998" y1="266.70" x2="39.39999999999998" y2="266.70" stroke="#111" stroke-width="1.2"/><line x1="36.89999999999998" y1="272.15" x2="39.39999999999998" y2="272.15" stroke="#111" stroke-width="1.2"/><line x1="36.89999999999998" y1="277.60" x2="39.39999999999998" y2="277.60" stroke="#111" stroke-width="1.2"/><line x1="36.89999999999998" y1="283.05" x2="39.39999999999998" y2="283.05" stroke="#111" stroke-width="1.2"/><line x1="39.40" y1="288.5" x2="39.40" y2="293.5" stroke="#111" stroke-width="1.3"/><text x="39.40" y="304.50" text-anchor="middle" font-family="Liberation Sans" font-size="12.3" fill="#404040" textLength="5.6" lengthAdjust="spacingAndGlyphs">0</text><line x1="53.30" y1="288.5" x2="53.30" y2="291.0" stroke="#111" stroke-width="1.3"/><line x1="67.21" y1="288.5" x2="67.21" y2="291.0" stroke="#111" stroke-width="1.3"/><line x1="81.11" y1="288.5" x2="81.11" y2="291.0" stroke="#111" stroke-width="1.3"/><line x1="95.01" y1="288.5" x2="95.01" y2="291.0" stroke="#111" stroke-width="1.3"/><line x1="108.91" y1="288.5" x2="108.91" y2="293.5" stroke="#111" stroke-width="1.3"/><text x="108.91" y="304.50" text-anchor="middle" font-family="Liberation Sans" font-size="12.3" fill="#404040" textLength="11.5" lengthAdjust="spacingAndGlyphs">50</text><line x1="122.82" y1="288.5" x2="122.82" y2="291.0" stroke="#111" stroke-width="1.3"/><line x1="136.72" y1="288.5" x2="136.72" y2="291.0" stroke="#111" stroke-width="1.3"/><line x1="150.62" y1="288.5" x2="150.62" y2="291.0" stroke="#111" stroke-width="1.3"/><line x1="164.53" y1="288.5" x2="164.53" y2="291.0" stroke="#111" stroke-width="1.3"/><line x1="178.43" y1="288.5" x2="178.43" y2="293.5" stroke="#111" stroke-width="1.3"/><text x="178.43" y="304.50" text-anchor="middle" font-family="Liberation Sans" font-size="12.3" fill="#404040" textLength="17.4" lengthAdjust="spacingAndGlyphs">100</text><line x1="192.33" y1="288.5" x2="192.33" y2="291.0" stroke="#111" stroke-width="1.3"/><line x1="206.23" y1="288.5" x2="206.23" y2="291.0" stroke="#111" stroke-width="1.3"/><line x1="220.14" y1="288.5" x2="220.14" y2="291.0" stroke="#111" stroke-width="1.3"/><line x1="234.04" y1="288.5" x2="234.04" y2="291.0" stroke="#111" stroke-width="1.3"/><line x1="247.94" y1="288.5" x2="247.94" y2="293.5" stroke="#111" stroke-width="1.3"/><text x="247.94" y="304.50" text-anchor="middle" font-family="Liberation Sans" font-size="12.3" fill="#404040" textLength="17.4" lengthAdjust="spacingAndGlyphs">150</text><line x1="261.85" y1="288.5" x2="261.85" y2="291.0" stroke="#111" stroke-width="1.3"/><line x1="275.75" y1="288.5" x2="275.75" y2="291.0" stroke="#111" stroke-width="1.3"/><line x1="289.65" y1="288.5" x2="289.65" y2="291.0" stroke="#111" stroke-width="1.3"/><line x1="303.55" y1="288.5" x2="303.55" y2="291.0" stroke="#111" stroke-width="1.3"/><line x1="317.46" y1="288.5" x2="317.46" y2="293.5" stroke="#111" stroke-width="1.3"/><text x="317.46" y="304.50" text-anchor="middle" font-family="Liberation Sans" font-size="12.3" fill="#404040" textLength="17.4" lengthAdjust="spacingAndGlyphs">200</text><line x1="331.36" y1="288.5" x2="331.36" y2="291.0" stroke="#111" stroke-width="1.3"/><line x1="345.26" y1="288.5" x2="345.26" y2="291.0" stroke="#111" stroke-width="1.3"/><line x1="359.17" y1="288.5" x2="359.17" y2="291.0" stroke="#111" stroke-width="1.3"/><line x1="373.07" y1="288.5" x2="373.07" y2="291.0" stroke="#111" stroke-width="1.3"/><line x1="386.97" y1="288.5" x2="386.97" y2="293.5" stroke="#111" stroke-width="1.3"/><text x="386.97" y="304.50" text-anchor="middle" font-family="Liberation Sans" font-size="12.3" fill="#404040" textLength="17.4" lengthAdjust="spacingAndGlyphs">250</text><line x1="400.87" y1="288.5" x2="400.87" y2="291.0" stroke="#111" stroke-width="1.3"/><line x1="414.78" y1="288.5" x2="414.78" y2="291.0" stroke="#111" stroke-width="1.3"/><line x1="428.68" y1="288.5" x2="428.68" y2="291.0" stroke="#111" stroke-width="1.3"/><line x1="442.58" y1="288.5" x2="442.58" y2="291.0" stroke="#111" stroke-width="1.3"/><line x1="456.49" y1="288.5" x2="456.49" y2="293.5" stroke="#111" stroke-width="1.3"/><text x="456.49" y="304.50" text-anchor="middle" font-family="Liberation Sans" font-size="12.3" fill="#404040" textLength="17.4" lengthAdjust="spacingAndGlyphs">300</text><line x1="470.39" y1="288.5" x2="470.39" y2="291.0" stroke="#111" stroke-width="1.3"/><line x1="484.29" y1="288.5" x2="484.29" y2="291.0" stroke="#111" stroke-width="1.3"/><line x1="498.19" y1="288.5" x2="498.19" y2="291.0" stroke="#111" stroke-width="1.3"/><line x1="512.10" y1="288.5" x2="512.10" y2="291.0" stroke="#111" stroke-width="1.3"/><line x1="526.00" y1="288.5" x2="526.00" y2="293.5" stroke="#111" stroke-width="1.3"/><text x="526.00" y="304.50" text-anchor="middle" font-family="Liberation Sans" font-size="12.3" fill="#404040" textLength="17.4" lengthAdjust="spacingAndGlyphs">350</text><line x1="539.90" y1="288.5" x2="539.90" y2="291.0" stroke="#111" stroke-width="1.3"/><rect x="44.89999999999998" y="20.5" width="83" height="26" fill="#aaa" opacity="0.5" transform="translate(2,2)"/><rect x="44.89999999999998" y="20.5" width="83" height="26" fill="#f4f22e" stroke="#5d5a1c" stroke-width="1.2"/><text x="50.39999999999998" y="37" font-family="Liberation Sans" font-size="12" fill="#333">Temperatures</text></svg><div class="t" style="left:1032.00px;top:736.00px;font-size:60px;color:rgba(150,150,150,0.38);font-weight:700;">C</div><div class="t" style="left:1074.00px;top:746.00px;font-size:27px;color:rgba(150,150,150,0.38);font-weight:700;letter-spacing:0.3px">omputer</div><div class="t" style="left:1057.00px;top:762.00px;font-size:55px;color:rgba(150,150,150,0.38);font-weight:700;font-style:italic">B</div><div class="t" style="left:1097.00px;top:770.00px;font-size:26.5px;color:rgba(150,150,150,0.38);font-weight:700;">ase</div>
</body></html>
